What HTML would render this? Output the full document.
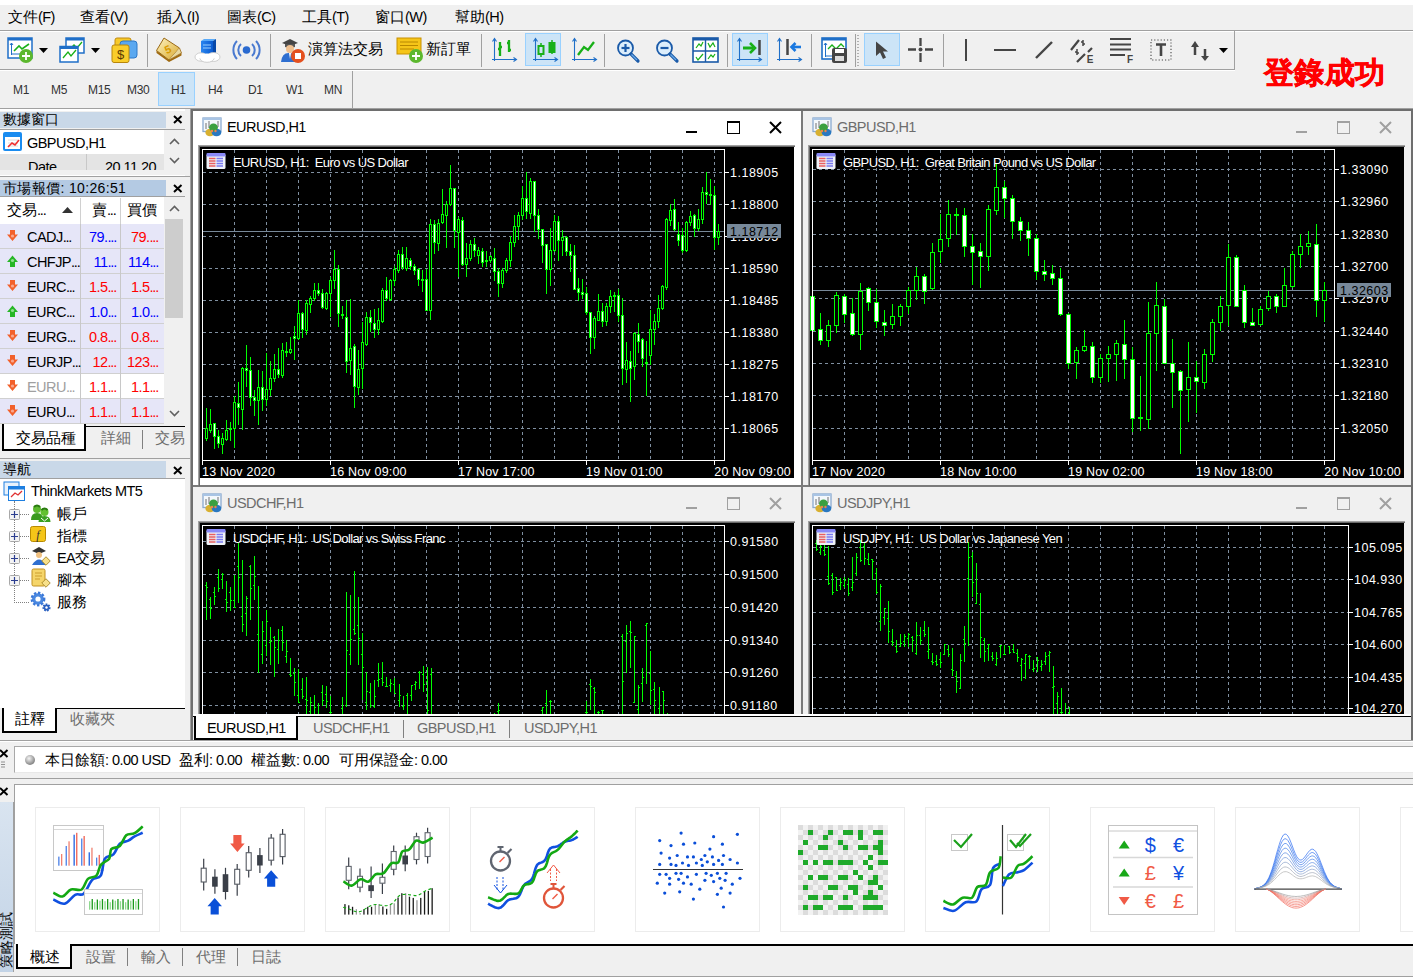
<!DOCTYPE html><html><head><meta charset="utf-8"><style>
*{box-sizing:border-box;margin:0;padding:0}
html,body{width:1413px;height:977px;overflow:hidden;background:#f0f0f0;font-family:"Liberation Sans",sans-serif;color:#000}
.a{position:absolute}
.t{position:absolute;white-space:nowrap;line-height:1}
.hl{position:absolute;height:1px;background:#a0a0a0}
.vl{position:absolute;width:1px;background:#a0a0a0}
svg{position:absolute;overflow:visible}
</style></head><body><div class="a" style="left:0px;top:0px;width:1413px;height:5px;background:#fff"></div><div class="t" style="left:8px;top:10px;font-size:14.5px">文件<span style="letter-spacing:-0.55px">(F)</span></div><div class="t" style="left:80px;top:10px;font-size:14.5px">查看<span style="letter-spacing:-0.55px">(V)</span></div><div class="t" style="left:157px;top:10px;font-size:14.5px">插入<span style="letter-spacing:-0.55px">(I)</span></div><div class="t" style="left:227px;top:10px;font-size:14.5px">圖表<span style="letter-spacing:-0.55px">(C)</span></div><div class="t" style="left:302px;top:10px;font-size:14.5px">工具<span style="letter-spacing:-0.55px">(T)</span></div><div class="t" style="left:375px;top:10px;font-size:14.5px">窗口<span style="letter-spacing:-0.55px">(W)</span></div><div class="t" style="left:455px;top:10px;font-size:14.5px">幫助<span style="letter-spacing:-0.55px">(H)</span></div><div class="a" style="left:0px;top:30px;width:1413px;height:1px;background:#a0a0a0"></div><div class="a" style="left:0px;top:31px;width:1413px;height:1px;background:#fff"></div><div class="a" style="left:0px;top:69px;width:1235px;height:1px;background:#a0a0a0"></div><div class="a" style="left:0px;top:70px;width:1235px;height:1px;background:#fff"></div><div class="a" style="left:158px;top:72px;width:37px;height:34px;background:#cce4f7;border:1px solid #99d1ff"></div><div class="t" style="left:13px;top:84px;font-size:12px;color:#333;letter-spacing:-0.3px">M1</div><div class="t" style="left:51px;top:84px;font-size:12px;color:#333;letter-spacing:-0.3px">M5</div><div class="t" style="left:88px;top:84px;font-size:12px;color:#333;letter-spacing:-0.3px">M15</div><div class="t" style="left:127px;top:84px;font-size:12px;color:#333;letter-spacing:-0.3px">M30</div><div class="t" style="left:171px;top:84px;font-size:12px;color:#333;letter-spacing:-0.3px">H1</div><div class="t" style="left:208px;top:84px;font-size:12px;color:#333;letter-spacing:-0.3px">H4</div><div class="t" style="left:248px;top:84px;font-size:12px;color:#333;letter-spacing:-0.3px">D1</div><div class="t" style="left:286px;top:84px;font-size:12px;color:#333;letter-spacing:-0.3px">W1</div><div class="t" style="left:324px;top:84px;font-size:12px;color:#333;letter-spacing:-0.3px">MN</div><div class="a" style="left:352px;top:71px;width:1px;height:37px;background:#a0a0a0"></div><div class="a" style="left:0px;top:108px;width:1413px;height:1px;background:#a0a0a0"></div><div class="a" style="left:0px;top:109px;width:190px;height:2px;background:#fff"></div><div class="t" style="left:1264px;top:58px;font-size:29.5px;font-weight:bold;color:#f00;-webkit-text-stroke:0.6px #f00;letter-spacing:0.3px">登錄成功</div><div class="a" style="left:147px;top:34px;width:1px;height:33px;background:#a0a0a0"></div><div class="a" style="left:270px;top:34px;width:1px;height:33px;background:#a0a0a0"></div><div class="a" style="left:481px;top:34px;width:1px;height:33px;background:#a0a0a0"></div><div class="a" style="left:604px;top:34px;width:1px;height:33px;background:#a0a0a0"></div><div class="a" style="left:727px;top:34px;width:1px;height:33px;background:#a0a0a0"></div><div class="a" style="left:811px;top:34px;width:1px;height:33px;background:#a0a0a0"></div><div class="a" style="left:943px;top:34px;width:1px;height:33px;background:#a0a0a0"></div><div class="a" style="left:525px;top:33px;width:36px;height:33px;background:#cce4f7;border:1px solid #99d1ff"></div><div class="a" style="left:732px;top:33px;width:36px;height:33px;background:#cce4f7;border:1px solid #99d1ff"></div><div class="a" style="left:864px;top:33px;width:36px;height:33px;background:#cce4f7;border:1px solid #99d1ff"></div><div class="t" style="left:308px;top:42px;font-size:14.5px">演算法交易</div><div class="t" style="left:426px;top:42px;font-size:14.5px">新訂單</div><div class="a" style="left:1234px;top:31px;width:1px;height:39px;background:#a0a0a0"></div><svg style="left:7px;top:37px" width="27" height="27"><rect x="1" y="1" width="24" height="20" fill="#fff" stroke="#1f6fc8" stroke-width="1.5"/><rect x="1" y="1" width="24" height="2.5" fill="#1f6fc8"/><path d="M4.5 18V6M3 8L4.5 6L6 8M4.5 17H22" stroke="#1f6fc8" stroke-width="1" fill="none"/><path d="M7 14L12 9L15 12L22 7" stroke="#18b018" stroke-width="1.6" fill="none"/><circle cx="19" cy="19" r="7" fill="#5cb82e"/><path d="M19 15V23M15 19H23" stroke="#fff" stroke-width="1.8"/></svg><svg style="left:39px;top:48px" width="10" height="6"><path d="M0 0H9L4.5 5Z" fill="#000"/></svg><svg style="left:59px;top:37px" width="27" height="27"><rect x="7" y="1" width="18" height="15" fill="#fff" stroke="#1f6fc8" stroke-width="1.5"/><rect x="7" y="1" width="18" height="2.5" fill="#1f6fc8"/><path d="M10 13L15 8L18 11L23 5" stroke="#18b018" stroke-width="1.3" fill="none"/><rect x="1" y="9.5" width="18" height="15.5" fill="#fff" stroke="#1f6fc8" stroke-width="1.5"/><rect x="1" y="9.5" width="18" height="2.5" fill="#1f6fc8"/><path d="M4 21L9 15L12 19L17 13" stroke="#18b018" stroke-width="1.3" fill="none"/></svg><svg style="left:91px;top:48px" width="10" height="6"><path d="M0 0H9L4.5 5Z" fill="#000"/></svg><svg style="left:111px;top:37px" width="27" height="27"><rect x="4" y="1" width="16" height="14" rx="2" fill="#f7c928" stroke="#c08a10"/><rect x="9" y="4" width="17" height="17" rx="3" fill="#5aa8f0" stroke="#2c78c8"/><rect x="1" y="8" width="17" height="17.5" rx="2" fill="#f9cd2a" stroke="#b8860b"/><text x="9.5" y="22" font-size="13" font-family="Liberation Sans" text-anchor="middle" fill="#5a3a00">$</text></svg><svg style="left:155px;top:37px" width="28" height="26"><defs><linearGradient id="bk" x1="0" y1="0" x2="1" y2="1"><stop offset="0" stop-color="#fff4c0"/><stop offset="1" stop-color="#d8a830"/></linearGradient></defs><path d="M1.5 13.5L14 23L26.5 16V18.5L14 25L1.5 16Z" fill="#a06a10"/><path d="M1.5 13.5L9 1L24.5 11L14 23Z" fill="url(#bk)" stroke="#9a6a18" stroke-width="1"/><path d="M24.5 11L26.5 16L14 23" fill="#e8d8a0" stroke="#9a6a18" stroke-width="0.8"/><text x="12.5" y="16.5" font-size="11" font-family="Liberation Sans" font-weight="bold" text-anchor="middle" fill="#d89a00" transform="rotate(-25 12.5 12)">5</text></svg><svg style="left:194px;top:38px" width="28" height="25"><defs><linearGradient id="sv" x1="0" y1="0" x2="1" y2="0"><stop offset="0" stop-color="#2a86f0"/><stop offset="1" stop-color="#0a5ad0"/></linearGradient></defs><path d="M7 3L10 1H22L19 3Z" fill="#5aaaf8"/><rect x="7" y="3" width="12" height="14" fill="url(#sv)"/><path d="M19 3L22 1V15L19 17Z" fill="#0848a8"/><path d="M9 7H17M9 10H17" stroke="#9ad0ff" stroke-width="1"/><ellipse cx="7" cy="19" rx="6" ry="4.2" fill="#fff" stroke="#c4c4c4" stroke-width="0.8"/><ellipse cx="19.5" cy="19" rx="6.5" ry="4.5" fill="#fff" stroke="#c4c4c4" stroke-width="0.8"/><ellipse cx="13" cy="20.5" rx="7" ry="3.8" fill="#fff" stroke="#c4c4c4" stroke-width="0.8"/><ellipse cx="13" cy="18.5" rx="9" ry="3" fill="#fff"/></svg><svg style="left:233px;top:39px" width="28" height="23"><circle cx="13.5" cy="11" r="3.8" fill="#2a6ad0"/><path d="M8 5A8 8 0 0 0 8 17M19 5A8 8 0 0 1 19 17" stroke="#4a7ad0" stroke-width="2" fill="none"/><path d="M4 2A13 13 0 0 0 4 20M23 2A13 13 0 0 1 23 20" stroke="#4a7ad0" stroke-width="2" fill="none"/></svg><svg style="left:279px;top:37px" width="28" height="27"><path d="M3 6L11 2L19 6L11 9Z" fill="#444"/><path d="M6 7V10Q11 12 16 10V7" fill="#555"/><circle cx="11" cy="12" r="4" fill="#f0c090"/><path d="M2 25Q3 15 11 16Q17 16 19 22V25Z" fill="#2f6fd0"/><path d="M10 16L11 22L12 16Z" fill="#fff"/><circle cx="19" cy="19" r="7" fill="#e4501e"/><rect x="16" y="16" width="6" height="6" fill="#fff"/></svg><svg style="left:396px;top:37px" width="27" height="27"><path d="M1 1H25V16L23 17V4H1Z" fill="#d8a010"/><rect x="1" y="1" width="24" height="16" fill="#f5c518" stroke="#c89000"/><path d="M4 5H22M4 8.5H22M4 12H18" stroke="#b88800" stroke-width="1"/><circle cx="20" cy="19" r="7" fill="#5cb82e"/><path d="M20 15V23M16 19H24" stroke="#fff" stroke-width="1.8"/></svg><svg style="left:491px;top:37px" width="27" height="26"><path d="M3.5 24V2M1.5 4.5L3.5 1.5L5.5 4.5M1 22.5H25M22.5 20.5L25.5 22.5L22.5 24.5" stroke="#1f6fc8" stroke-width="1.1" fill="none"/><path d="M9 5V19M7 12H9M9 10H11M18 3V15M16 6H18M18 13H20" stroke="#18b018" stroke-width="2.3" fill="none"/></svg><svg style="left:532px;top:37px" width="27" height="26"><path d="M3.5 24V2M1.5 4.5L3.5 1.5L5.5 4.5M1 22.5H25M22.5 20.5L25.5 22.5L22.5 24.5" stroke="#1f6fc8" stroke-width="1.1" fill="none"/><path d="M9 6V20M20 3V17" stroke="#18b018" stroke-width="1.5"/><rect x="6.5" y="9" width="5" height="8" fill="#cfe4f6" stroke="#18b018" stroke-width="2"/><rect x="17.5" y="6" width="5" height="9" fill="#18b018" stroke="#18b018" stroke-width="2"/></svg><svg style="left:571px;top:37px" width="27" height="26"><path d="M3.5 24V2M1.5 4.5L3.5 1.5L5.5 4.5M1 22.5H25M22.5 20.5L25.5 22.5L22.5 24.5" stroke="#1f6fc8" stroke-width="1.1" fill="none"/><path d="M7 18L13 10L17 13L23 5" stroke="#18b018" stroke-width="2.3" fill="none"/></svg><svg style="left:616px;top:38px" width="25" height="25"><circle cx="9.5" cy="10" r="7.5" fill="#dceefc" stroke="#1a5aa8" stroke-width="1.8"/><path d="M15 16L22 23" stroke="#1a5aa8" stroke-width="3.2" stroke-linecap="round"/><path d="M15.5 16.5L21 22" stroke="#6aaae8" stroke-width="1.2"/><path d="M5.5 10H13.5" stroke="#1a5aa8" stroke-width="2.2"/><path d="M9.5 6V14" stroke="#1a5aa8" stroke-width="2.2"/></svg><svg style="left:655px;top:38px" width="25" height="25"><circle cx="9.5" cy="10" r="7.5" fill="#dceefc" stroke="#1a5aa8" stroke-width="1.8"/><path d="M15 16L22 23" stroke="#1a5aa8" stroke-width="3.2" stroke-linecap="round"/><path d="M15.5 16.5L21 22" stroke="#6aaae8" stroke-width="1.2"/><path d="M5.5 10H13.5" stroke="#1a5aa8" stroke-width="2.2"/></svg><svg style="left:692px;top:37px" width="27" height="27"><rect x="1" y="1" width="25" height="24" fill="#fff" stroke="#1a5aa8" stroke-width="1.6"/><rect x="1" y="1" width="25" height="2.5" fill="#1a5aa8"/><path d="M13.5 3V25M1 14H26" stroke="#1a5aa8" stroke-width="1.4"/><path d="M4 11L7 7L9 9L11 5M16 6L18 10L21 6L23 10M4 20L6 23L11 17M16 22L19 18L21 20L23 17" stroke="#18b018" stroke-width="1.2" fill="none"/></svg><svg style="left:736px;top:37px" width="28" height="26"><path d="M3.5 24V2M1.5 4.5L3.5 1.5L5.5 4.5M1 22.5H25M22.5 20.5L25.5 22.5L22.5 24.5" stroke="#1f6fc8" stroke-width="1.1" fill="none"/><path d="M7 11H17" stroke="#18b018" stroke-width="3"/><path d="M14 6L19 11L14 16" stroke="#18b018" stroke-width="2.6" fill="none"/><path d="M23.5 3V18" stroke="#454545" stroke-width="2.5"/></svg><svg style="left:776px;top:37px" width="28" height="26"><path d="M3.5 24V2M1.5 4.5L3.5 1.5L5.5 4.5M1 22.5H25M22.5 20.5L25.5 22.5L22.5 24.5" stroke="#1f6fc8" stroke-width="1.1" fill="none"/><path d="M11.5 2V18" stroke="#454545" stroke-width="2.5"/><path d="M16 10H25" stroke="#1a78e0" stroke-width="2.6"/><path d="M19.5 6L15.5 10L19.5 14" stroke="#1a78e0" stroke-width="2.6" fill="none"/></svg><svg style="left:821px;top:37px" width="28" height="27"><rect x="1" y="1" width="24" height="21" fill="#fff" stroke="#1f6fc8" stroke-width="1.6"/><rect x="1" y="1" width="24" height="2.5" fill="#1f6fc8"/><path d="M4.5 20V6M3 8L4.5 6L6 8M4.5 19H13" stroke="#1f6fc8" stroke-width="1" fill="none"/><path d="M7 12L11 8L15 12L20 7L23 10" stroke="#18b018" stroke-width="1.3" fill="none"/><rect x="11" y="11" width="15" height="15" rx="2" fill="#454545"/><rect x="14" y="12" width="9" height="4" fill="#fff"/><rect x="14" y="19" width="9" height="5" fill="#ddd"/></svg><div class="a" style="left:855px;top:34px;width:1px;height:33px;background:#a0a0a0"></div><div class="a" style="left:857px;top:35px;width:2px;height:31px;background:repeating-linear-gradient(#b0b0b0 0 1px,transparent 1px 3px)"></div><svg style="left:874px;top:40px" width="16" height="22"><path d="M2 1.5V16L6 12.5L9 19L12 17.5L9 11.5H14Z" fill="#454545"/></svg><svg style="left:907px;top:37px" width="27" height="26"><path d="M13.5 1V9M13.5 16V25M1 12.5H9M18 12.5H26" stroke="#454545" stroke-width="2.3"/><circle cx="13.5" cy="12.5" r="2" fill="#454545"/></svg><div class="a" style="left:965px;top:39px;width:2px;height:22px;background:#454545"></div><div class="a" style="left:994px;top:49px;width:22px;height:2px;background:#454545"></div><svg style="left:1034px;top:40px" width="20" height="20"><path d="M2 18L18 2" stroke="#454545" stroke-width="2.4"/></svg><svg style="left:1070px;top:37px" width="27" height="27"><path d="M1 13L9 3M7 25L15 17M18 15L22 11" stroke="#454545" stroke-width="2.2"/><path d="M13 3V9M11 5H13M13 7H15M7 12V18M5 15H7M7 16H9" stroke="#454545" stroke-width="1.5"/><text x="20" y="26" font-size="10" font-weight="bold" font-family="Liberation Sans" text-anchor="middle" fill="#454545">E</text></svg><svg style="left:1109px;top:37px" width="27" height="27"><path d="M1 2H22M1 7.5H22M1 12.5H22M1 18H16" stroke="#454545" stroke-width="2"/><text x="21" y="26" font-size="10" font-weight="bold" font-family="Liberation Sans" text-anchor="middle" fill="#454545">F</text></svg><svg style="left:1150px;top:39px" width="23" height="23"><rect x="1" y="1" width="20" height="20" fill="none" stroke="#454545" stroke-width="1.1" stroke-dasharray="1.2 2"/><path d="M6 5.5H16M11 5.5V17" stroke="#454545" stroke-width="2.6"/></svg><svg style="left:1190px;top:39px" width="22" height="23"><path d="M5 16V6" stroke="#454545" stroke-width="2.5"/><path d="M1 8L5 2L9 8Z" fill="#454545"/><path d="M15 10V19" stroke="#454545" stroke-width="2.5"/><path d="M11 17L15 22L19 17Z" fill="#454545"/></svg><svg style="left:1219px;top:48px" width="10" height="6"><path d="M0 0H9L4.5 5Z" fill="#000"/></svg><div class="a" style="left:185px;top:109px;width:5px;height:632px;background:#f0f0f0"></div><div class="a" style="left:0px;top:111px;width:185px;height:1px;background:#f0f0f0"></div><div class="a" style="left:0px;top:112px;width:166px;height:16px;background:#c9d8e8"></div><div class="t" style="left:3px;top:112px;font-size:14px">數據窗口</div><svg style="left:173px;top:115px" width="10" height="9"><path d="M1 1L8.5 8M8.5 1L1 8" stroke="#000" stroke-width="2"/></svg><div class="a" style="left:0px;top:129px;width:185px;height:1px;background:#a0a0a0"></div><div class="a" style="left:0px;top:130px;width:164px;height:24px;background:#fff"></div><div class="a" style="left:0px;top:154px;width:164px;height:16px;background:#e4e4e4"></div><div class="a" style="left:86px;top:154px;width:1px;height:16px;background:#c8c8c8"></div><div class="a" style="left:0;top:154px;width:164px;height:16px;overflow:hidden"><div class="t" style="left:28px;top:6px;font-size:14.5px"><span style="letter-spacing:-0.55px">Date</span></div><div class="t" style="left:105px;top:6px;font-size:14.5px"><span style="letter-spacing:-0.55px">20.11.20</span></div></div><div class="a" style="left:164px;top:130px;width:21px;height:41px;background:#f0f0f0"></div><svg style="left:169px;top:138px" width="11" height="7"><path d="M1 6L5.5 1.5L10 6" fill="none" stroke="#606060" stroke-width="1.6"/></svg><svg style="left:169px;top:157px" width="11" height="7"><path d="M1 1L5.5 5.5L10 1" fill="none" stroke="#606060" stroke-width="1.6"/></svg><svg style="left:3px;top:132px" width="19" height="19"><rect x="1" y="1" width="17" height="17" rx="1" fill="#fff" stroke="#1a8cf0" stroke-width="2"/><rect x="1" y="1" width="17" height="4" fill="#1a8cf0"/><path d="M5 8H15M5 11H15M5 14H15" stroke="#dcdcdc" stroke-width="1"/><path d="M5 15L9 11L12 13L16 8" fill="none" stroke="#f03030" stroke-width="1.6"/></svg><div class="t" style="left:27px;top:136px;font-size:14.5px"><span style="letter-spacing:-0.55px">GBPUSD,H1</span></div><div class="a" style="left:0px;top:175px;width:185px;height:1px;background:#fff"></div><div class="a" style="left:0px;top:176px;width:190px;height:1px;background:#a0a0a0"></div><div class="a" style="left:0px;top:180px;width:166px;height:16px;background:#b4cae3"></div><div class="t" style="left:3px;top:181px;font-size:14px;letter-spacing:0.35px">市場報價: 10:26:51</div><svg style="left:173px;top:184px" width="10" height="9"><path d="M1 1L8.5 8M8.5 1L1 8" stroke="#000" stroke-width="2"/></svg><div class="a" style="left:0px;top:196px;width:185px;height:1px;background:#a0a0a0"></div><div class="a" style="left:0px;top:197px;width:164px;height:227px;background:#fff"></div><div class="t" style="left:7px;top:203px;font-size:14.5px">交易<span style="letter-spacing:-0.55px"><span style="letter-spacing:-1.2px">...</span></span></div><svg style="left:62px;top:207px" width="11" height="7"><path d="M0 6L5.5 0L11 6Z" fill="#333"/></svg><div class="t" style="left:92px;top:203px;font-size:14.5px">賣<span style="letter-spacing:-0.55px"><span style="letter-spacing:-1.2px">...</span></span></div><div class="t" style="left:127px;top:203px;font-size:14.5px">買價</div><div class="a" style="left:80px;top:198px;width:1px;height:226px;background:#d0d0d0"></div><div class="a" style="left:120px;top:198px;width:1px;height:226px;background:#d0d0d0"></div><div class="a" style="left:0px;top:224px;width:164px;height:24px;background:#e6e6f8"></div><div class="a" style="left:0px;top:248px;width:164px;height:1px;background:#d0d0d0"></div><div class="a" style="left:80px;top:224px;width:1px;height:25px;background:#c8c8c8"></div><div class="a" style="left:120px;top:224px;width:1px;height:25px;background:#c8c8c8"></div><div class="t" style="left:27px;top:230px;font-size:14.5px;color:#000"><span style="letter-spacing:-0.55px">CADJ<span style="letter-spacing:-1.2px">...</span></span></div><div class="t" style="left:81px;top:230px;width:35px;text-align:right;font-size:14.5px;color:#00f"><span style="letter-spacing:-0.55px">79.<span style="letter-spacing:-1.2px">...</span></span></div><div class="t" style="left:121px;top:230px;width:37px;text-align:right;font-size:14.5px;color:#f00"><span style="letter-spacing:-0.55px">79.<span style="letter-spacing:-1.2px">...</span></span></div><svg style="left:6px;top:229px" width="13" height="13"><path d="M4 1H9V5.5H12L6.5 12L1 5.5H4Z" fill="#f2602a"/><circle cx="6.5" cy="7" r="1.6" fill="#f8a890"/></svg><div class="a" style="left:0px;top:249px;width:164px;height:24px;background:#e6e6f8"></div><div class="a" style="left:0px;top:273px;width:164px;height:1px;background:#d0d0d0"></div><div class="a" style="left:80px;top:249px;width:1px;height:25px;background:#c8c8c8"></div><div class="a" style="left:120px;top:249px;width:1px;height:25px;background:#c8c8c8"></div><div class="t" style="left:27px;top:255px;font-size:14.5px;color:#000"><span style="letter-spacing:-0.55px">CHFJP<span style="letter-spacing:-1.2px">...</span></span></div><div class="t" style="left:81px;top:255px;width:35px;text-align:right;font-size:14.5px;color:#00f"><span style="letter-spacing:-0.55px">11<span style="letter-spacing:-1.2px">...</span></span></div><div class="t" style="left:121px;top:255px;width:37px;text-align:right;font-size:14.5px;color:#00f"><span style="letter-spacing:-0.55px">114<span style="letter-spacing:-1.2px">...</span></span></div><svg style="left:6px;top:255px" width="13" height="13"><path d="M4 12H9V7H12L6.5 0.5L1 7H4Z" fill="#26b626"/><circle cx="6.5" cy="5.5" r="1.6" fill="#90e090"/></svg><div class="a" style="left:0px;top:274px;width:164px;height:24px;background:#e6e6f8"></div><div class="a" style="left:0px;top:298px;width:164px;height:1px;background:#d0d0d0"></div><div class="a" style="left:80px;top:274px;width:1px;height:25px;background:#c8c8c8"></div><div class="a" style="left:120px;top:274px;width:1px;height:25px;background:#c8c8c8"></div><div class="t" style="left:27px;top:280px;font-size:14.5px;color:#000"><span style="letter-spacing:-0.55px">EURC<span style="letter-spacing:-1.2px">...</span></span></div><div class="t" style="left:81px;top:280px;width:35px;text-align:right;font-size:14.5px;color:#f00"><span style="letter-spacing:-0.55px">1.5<span style="letter-spacing:-1.2px">...</span></span></div><div class="t" style="left:121px;top:280px;width:37px;text-align:right;font-size:14.5px;color:#f00"><span style="letter-spacing:-0.55px">1.5<span style="letter-spacing:-1.2px">...</span></span></div><svg style="left:6px;top:279px" width="13" height="13"><path d="M4 1H9V5.5H12L6.5 12L1 5.5H4Z" fill="#f2602a"/><circle cx="6.5" cy="7" r="1.6" fill="#f8a890"/></svg><div class="a" style="left:0px;top:299px;width:164px;height:24px;background:#e6e6f8"></div><div class="a" style="left:0px;top:323px;width:164px;height:1px;background:#d0d0d0"></div><div class="a" style="left:80px;top:299px;width:1px;height:25px;background:#c8c8c8"></div><div class="a" style="left:120px;top:299px;width:1px;height:25px;background:#c8c8c8"></div><div class="t" style="left:27px;top:305px;font-size:14.5px;color:#000"><span style="letter-spacing:-0.55px">EURC<span style="letter-spacing:-1.2px">...</span></span></div><div class="t" style="left:81px;top:305px;width:35px;text-align:right;font-size:14.5px;color:#00f"><span style="letter-spacing:-0.55px">1.0<span style="letter-spacing:-1.2px">...</span></span></div><div class="t" style="left:121px;top:305px;width:37px;text-align:right;font-size:14.5px;color:#00f"><span style="letter-spacing:-0.55px">1.0<span style="letter-spacing:-1.2px">...</span></span></div><svg style="left:6px;top:305px" width="13" height="13"><path d="M4 12H9V7H12L6.5 0.5L1 7H4Z" fill="#26b626"/><circle cx="6.5" cy="5.5" r="1.6" fill="#90e090"/></svg><div class="a" style="left:0px;top:324px;width:164px;height:24px;background:#e6e6f8"></div><div class="a" style="left:0px;top:348px;width:164px;height:1px;background:#d0d0d0"></div><div class="a" style="left:80px;top:324px;width:1px;height:25px;background:#c8c8c8"></div><div class="a" style="left:120px;top:324px;width:1px;height:25px;background:#c8c8c8"></div><div class="t" style="left:27px;top:330px;font-size:14.5px;color:#000"><span style="letter-spacing:-0.55px">EURG<span style="letter-spacing:-1.2px">...</span></span></div><div class="t" style="left:81px;top:330px;width:35px;text-align:right;font-size:14.5px;color:#f00"><span style="letter-spacing:-0.55px">0.8<span style="letter-spacing:-1.2px">...</span></span></div><div class="t" style="left:121px;top:330px;width:37px;text-align:right;font-size:14.5px;color:#f00"><span style="letter-spacing:-0.55px">0.8<span style="letter-spacing:-1.2px">...</span></span></div><svg style="left:6px;top:329px" width="13" height="13"><path d="M4 1H9V5.5H12L6.5 12L1 5.5H4Z" fill="#f2602a"/><circle cx="6.5" cy="7" r="1.6" fill="#f8a890"/></svg><div class="a" style="left:0px;top:349px;width:164px;height:24px;background:#e6e6f8"></div><div class="a" style="left:0px;top:373px;width:164px;height:1px;background:#d0d0d0"></div><div class="a" style="left:80px;top:349px;width:1px;height:25px;background:#c8c8c8"></div><div class="a" style="left:120px;top:349px;width:1px;height:25px;background:#c8c8c8"></div><div class="t" style="left:27px;top:355px;font-size:14.5px;color:#000"><span style="letter-spacing:-0.55px">EURJP<span style="letter-spacing:-1.2px">...</span></span></div><div class="t" style="left:81px;top:355px;width:35px;text-align:right;font-size:14.5px;color:#f00"><span style="letter-spacing:-0.55px">12<span style="letter-spacing:-1.2px">...</span></span></div><div class="t" style="left:121px;top:355px;width:37px;text-align:right;font-size:14.5px;color:#f00"><span style="letter-spacing:-0.55px">123<span style="letter-spacing:-1.2px">...</span></span></div><svg style="left:6px;top:354px" width="13" height="13"><path d="M4 1H9V5.5H12L6.5 12L1 5.5H4Z" fill="#f2602a"/><circle cx="6.5" cy="7" r="1.6" fill="#f8a890"/></svg><div class="a" style="left:0px;top:398px;width:164px;height:1px;background:#d0d0d0"></div><div class="a" style="left:80px;top:374px;width:1px;height:25px;background:#c8c8c8"></div><div class="a" style="left:120px;top:374px;width:1px;height:25px;background:#c8c8c8"></div><div class="t" style="left:27px;top:380px;font-size:14.5px;color:#a0a0a0"><span style="letter-spacing:-0.55px">EURU<span style="letter-spacing:-1.2px">...</span></span></div><div class="t" style="left:81px;top:380px;width:35px;text-align:right;font-size:14.5px;color:#f00"><span style="letter-spacing:-0.55px">1.1<span style="letter-spacing:-1.2px">...</span></span></div><div class="t" style="left:121px;top:380px;width:37px;text-align:right;font-size:14.5px;color:#f00"><span style="letter-spacing:-0.55px">1.1<span style="letter-spacing:-1.2px">...</span></span></div><svg style="left:6px;top:379px" width="13" height="13"><path d="M4 1H9V5.5H12L6.5 12L1 5.5H4Z" fill="#f2602a"/><circle cx="6.5" cy="7" r="1.6" fill="#f8a890"/></svg><div class="a" style="left:0px;top:399px;width:164px;height:24px;background:#e6e6f8"></div><div class="a" style="left:0px;top:423px;width:164px;height:1px;background:#d0d0d0"></div><div class="a" style="left:80px;top:399px;width:1px;height:25px;background:#c8c8c8"></div><div class="a" style="left:120px;top:399px;width:1px;height:25px;background:#c8c8c8"></div><div class="t" style="left:27px;top:405px;font-size:14.5px;color:#000"><span style="letter-spacing:-0.55px">EURU<span style="letter-spacing:-1.2px">...</span></span></div><div class="t" style="left:81px;top:405px;width:35px;text-align:right;font-size:14.5px;color:#f00"><span style="letter-spacing:-0.55px">1.1<span style="letter-spacing:-1.2px">...</span></span></div><div class="t" style="left:121px;top:405px;width:37px;text-align:right;font-size:14.5px;color:#f00"><span style="letter-spacing:-0.55px">1.1<span style="letter-spacing:-1.2px">...</span></span></div><svg style="left:6px;top:404px" width="13" height="13"><path d="M4 1H9V5.5H12L6.5 12L1 5.5H4Z" fill="#f2602a"/><circle cx="6.5" cy="7" r="1.6" fill="#f8a890"/></svg><div class="a" style="left:164px;top:197px;width:21px;height:227px;background:#f0f0f0"></div><div class="a" style="left:165px;top:219px;width:18px;height:99px;background:#cdcdcd"></div><svg style="left:169px;top:205px" width="11" height="7"><path d="M1 6L5.5 1.5L10 6" fill="none" stroke="#606060" stroke-width="1.6"/></svg><svg style="left:169px;top:410px" width="11" height="7"><path d="M1 1L5.5 5.5L10 1" fill="none" stroke="#606060" stroke-width="1.6"/></svg><div class="a" style="left:0px;top:424px;width:185px;height:29px;background:#f0f0f0"></div><div class="a" style="left:86px;top:426px;width:99px;height:1px;background:#000"></div><div class="a" style="left:2px;top:424px;width:84px;height:27px;background:#fff;border:2px solid #000;border-top:none"></div><div class="t" style="left:16px;top:431px;font-size:14.5px">交易品種</div><div class="t" style="left:101px;top:431px;font-size:14.5px;color:#6d6d6d">詳細</div><div class="a" style="left:142px;top:430px;width:1px;height:19px;background:#808080"></div><div class="t" style="left:155px;top:431px;font-size:14.5px;color:#6d6d6d">交易</div><div class="a" style="left:0px;top:458px;width:190px;height:1px;background:#a0a0a0"></div><div class="a" style="left:0px;top:461px;width:166px;height:17px;background:#c9d8e8"></div><div class="t" style="left:3px;top:462px;font-size:14px">導航</div><svg style="left:173px;top:466px" width="10" height="9"><path d="M1 1L8.5 8M8.5 1L1 8" stroke="#000" stroke-width="2"/></svg><div class="a" style="left:0px;top:478px;width:185px;height:1px;background:#a0a0a0"></div><div class="a" style="left:0px;top:479px;width:185px;height:229px;background:#fff"></div><svg style="left:3px;top:481px" width="23" height="21"><rect x="1" y="1" width="15" height="13" fill="#e8f2fc" stroke="#1e7fe0"/><rect x="5.5" y="5.5" width="16" height="14" fill="#fff" stroke="#1e7fe0"/><rect x="5.5" y="5.5" width="16" height="3" fill="#1e7fe0"/><path d="M8 16L12 12L15 14L19 10" fill="none" stroke="#e03030" stroke-width="1.3"/></svg><div class="t" style="left:31px;top:484px;font-size:14.5px"><span style="letter-spacing:-0.55px">ThinkMarkets MT5</span></div><div class="a" style="left:14px;top:501px;width:1px;height:100px;border-left:1px dotted #808080"></div><div class="a" style="left:14px;top:514px;width:15px;height:1px;border-top:1px dotted #808080"></div><svg style="left:9px;top:509px" width="12" height="12"><rect x="0.5" y="0.5" width="10" height="10" rx="1" fill="#f4f4f4" stroke="#a8a8a8"/><path d="M2 5.5H9M5.5 2V9" stroke="#2c3e90" stroke-width="1.2"/></svg><div class="t" style="left:57px;top:507px;font-size:14.5px">帳戶</div><div class="a" style="left:14px;top:536px;width:15px;height:1px;border-top:1px dotted #808080"></div><svg style="left:9px;top:531px" width="12" height="12"><rect x="0.5" y="0.5" width="10" height="10" rx="1" fill="#f4f4f4" stroke="#a8a8a8"/><path d="M2 5.5H9M5.5 2V9" stroke="#2c3e90" stroke-width="1.2"/></svg><div class="t" style="left:57px;top:529px;font-size:14.5px">指標</div><div class="a" style="left:14px;top:558px;width:15px;height:1px;border-top:1px dotted #808080"></div><svg style="left:9px;top:553px" width="12" height="12"><rect x="0.5" y="0.5" width="10" height="10" rx="1" fill="#f4f4f4" stroke="#a8a8a8"/><path d="M2 5.5H9M5.5 2V9" stroke="#2c3e90" stroke-width="1.2"/></svg><div class="t" style="left:57px;top:551px;font-size:14.5px"><span style="letter-spacing:-0.55px">EA</span>交易</div><div class="a" style="left:14px;top:580px;width:15px;height:1px;border-top:1px dotted #808080"></div><svg style="left:9px;top:575px" width="12" height="12"><rect x="0.5" y="0.5" width="10" height="10" rx="1" fill="#f4f4f4" stroke="#a8a8a8"/><path d="M2 5.5H9M5.5 2V9" stroke="#2c3e90" stroke-width="1.2"/></svg><div class="t" style="left:57px;top:573px;font-size:14.5px">腳本</div><div class="a" style="left:14px;top:602px;width:15px;height:1px;border-top:1px dotted #808080"></div><div class="t" style="left:57px;top:595px;font-size:14.5px">服務</div><svg style="left:30px;top:503px" width="22" height="20"><circle cx="7" cy="6" r="4" fill="#5cb82e"/><path d="M1 17Q1 10 7 10Q13 10 13 17Z" fill="#3a9a20"/><path d="M4 4Q7 1 10 4" stroke="#2a7a10" stroke-width="2" fill="none"/><circle cx="14.5" cy="9" r="4" fill="#62c030"/><path d="M8.5 19Q8.5 13 14.5 13Q20.5 13 20.5 19Z" fill="#3aa020"/><path d="M11.5 7Q14.5 4 17.5 7" stroke="#2a7a10" stroke-width="2" fill="none"/><path d="M11 15L14.5 18L18 15" stroke="#fff" stroke-width="1" fill="none"/></svg><svg style="left:30px;top:526px" width="17" height="17"><rect x="0.5" y="0.5" width="15" height="15" rx="2" fill="#f5c518" stroke="#b88a00"/><text x="8" y="13" font-size="12" font-style="italic" text-anchor="middle" font-family="Liberation Serif" fill="#333">f</text></svg><svg style="left:30px;top:546px" width="21" height="20"><path d="M2 5L9 1L16 5L9 8Z" fill="#333"/><circle cx="9" cy="9" r="3" fill="#f0c080"/><path d="M2 19Q9 8 16 19Z" fill="#2f6fd0"/><rect x="13" y="12" width="6" height="6" transform="rotate(45 16 15)" fill="#f7e08a" stroke="#a08020" stroke-width="0.8"/></svg><svg style="left:30px;top:568px" width="21" height="20"><rect x="2" y="1" width="13" height="17" rx="1.5" fill="#f5d56a" stroke="#c09020"/><path d="M5 5H12M5 8H12M5 11H10" stroke="#c09020" stroke-width="0.8"/><rect x="13" y="12" width="6" height="6" transform="rotate(45 16 15)" fill="#f7e08a" stroke="#a08020" stroke-width="0.8"/></svg><svg style="left:30px;top:591px" width="22" height="22"><circle cx="8" cy="8" r="5.8" fill="#3a78d8" stroke="#3a78d8" stroke-width="3.2" stroke-dasharray="2.2 1.6"/><circle cx="8" cy="8" r="5.2" fill="#4a88e0"/><circle cx="8" cy="8" r="2.6" fill="#fff"/><circle cx="16.5" cy="16.5" r="3" fill="#2a60c0" stroke="#2a60c0" stroke-width="2.2" stroke-dasharray="1.5 1.1"/><circle cx="16.5" cy="16.5" r="1.2" fill="#fff"/></svg><div class="a" style="left:0px;top:708px;width:185px;height:27px;background:#f0f0f0"></div><div class="a" style="left:57px;top:708px;width:128px;height:1px;background:#000"></div><div class="a" style="left:2px;top:708px;width:55px;height:25px;background:#fff;border:2px solid #000;border-top:none"></div><div class="t" style="left:15px;top:712px;font-size:14.5px">註釋</div><div class="t" style="left:70px;top:712px;font-size:14.5px;color:#6d6d6d">收藏夾</div><div class="a" style="left:190px;top:108px;width:1223px;height:1px;background:#a0a0a0"></div><div class="a" style="left:191px;top:109px;width:1222px;height:2px;background:#6e6e6e"></div><div class="a" style="left:190px;top:109px;width:1px;height:632px;background:#a0a0a0"></div><div class="a" style="left:191px;top:109px;width:2px;height:632px;background:#6e6e6e"></div><div class="a" style="left:1411px;top:109px;width:2px;height:632px;background:#6e6e6e"></div><div class="a" style="left:801px;top:111px;width:2px;height:603px;background:#7a7a7a"></div><div class="a" style="left:193px;top:485px;width:1218px;height:2px;background:#7a7a7a"></div><div class="a" style="left:193px;top:111px;width:608px;height:374px;background:#fff"></div><svg style="left:202px;top:117px" width="21" height="20"><rect x="1" y="1" width="18" height="13.5" fill="#f4f8fc" stroke="#8aaad0" stroke-width="1.3"/><rect x="1" y="1" width="18" height="2" fill="#a8c4e4"/><path d="M4 12V6M7 11V4M16 10V4" stroke="#707070" stroke-width="1"/><ellipse cx="8" cy="15.5" rx="4.6" ry="3.8" fill="#d8b030"/><ellipse cx="14.5" cy="15.5" rx="4.8" ry="3.8" fill="#2a78c0"/><ellipse cx="11.5" cy="10.5" rx="4.4" ry="4" fill="#3aa040"/><circle cx="10" cy="14" r="1.2" fill="#f08050"/><circle cx="13.5" cy="14" r="1.2" fill="#f08050"/></svg><div class="t" style="left:227px;top:120px;font-size:14.5px;color:#000"><span style="letter-spacing:-0.55px">EURUSD,H1</span></div><div class="a" style="left:686px;top:131px;width:11px;height:2px;background:#000"></div><div class="a" style="left:727px;top:121px;width:13px;height:13px;border:1.5px solid #000;border-top-width:2.5px"></div><svg style="left:769px;top:121px" width="13" height="13"><path d="M1 1L12 12M12 1L1 12" stroke="#000" stroke-width="2"/></svg><div class="a" style="left:198px;top:145px;width:597px;height:1px;background:#a0a0a0"></div><div class="a" style="left:198px;top:145px;width:1px;height:340px;background:#a0a0a0"></div><div class="a" style="left:199px;top:146px;width:596px;height:1px;background:#696969"></div><div class="a" style="left:199px;top:146px;width:1px;height:340px;background:#696969"></div><div class="a" style="left:803px;top:111px;width:608px;height:374px;background:#f0f0f0"></div><svg style="left:812px;top:117px" width="21" height="20"><rect x="1" y="1" width="18" height="13.5" fill="#f4f8fc" stroke="#8aaad0" stroke-width="1.3"/><rect x="1" y="1" width="18" height="2" fill="#a8c4e4"/><path d="M4 12V6M7 11V4M16 10V4" stroke="#707070" stroke-width="1"/><ellipse cx="8" cy="15.5" rx="4.6" ry="3.8" fill="#d8b030"/><ellipse cx="14.5" cy="15.5" rx="4.8" ry="3.8" fill="#2a78c0"/><ellipse cx="11.5" cy="10.5" rx="4.4" ry="4" fill="#3aa040"/><circle cx="10" cy="14" r="1.2" fill="#f08050"/><circle cx="13.5" cy="14" r="1.2" fill="#f08050"/></svg><div class="t" style="left:837px;top:120px;font-size:14.5px;color:#6d6d6d"><span style="letter-spacing:-0.55px">GBPUSD,H1</span></div><div class="a" style="left:1296px;top:131px;width:11px;height:2px;background:#a0a0a0"></div><div class="a" style="left:1337px;top:121px;width:13px;height:13px;border:1.5px solid #a0a0a0;border-top-width:2.5px"></div><svg style="left:1379px;top:121px" width="13" height="13"><path d="M1 1L12 12M12 1L1 12" stroke="#a0a0a0" stroke-width="2"/></svg><div class="a" style="left:808px;top:145px;width:597px;height:1px;background:#a0a0a0"></div><div class="a" style="left:808px;top:145px;width:1px;height:340px;background:#a0a0a0"></div><div class="a" style="left:809px;top:146px;width:596px;height:1px;background:#696969"></div><div class="a" style="left:809px;top:146px;width:1px;height:340px;background:#696969"></div><div class="a" style="left:193px;top:487px;width:608px;height:227px;background:#f0f0f0"></div><svg style="left:202px;top:493px" width="21" height="20"><rect x="1" y="1" width="18" height="13.5" fill="#f4f8fc" stroke="#8aaad0" stroke-width="1.3"/><rect x="1" y="1" width="18" height="2" fill="#a8c4e4"/><path d="M4 12V6M7 11V4M16 10V4" stroke="#707070" stroke-width="1"/><ellipse cx="8" cy="15.5" rx="4.6" ry="3.8" fill="#d8b030"/><ellipse cx="14.5" cy="15.5" rx="4.8" ry="3.8" fill="#2a78c0"/><ellipse cx="11.5" cy="10.5" rx="4.4" ry="4" fill="#3aa040"/><circle cx="10" cy="14" r="1.2" fill="#f08050"/><circle cx="13.5" cy="14" r="1.2" fill="#f08050"/></svg><div class="t" style="left:227px;top:496px;font-size:14.5px;color:#6d6d6d"><span style="letter-spacing:-0.55px">USDCHF,H1</span></div><div class="a" style="left:686px;top:507px;width:11px;height:2px;background:#a0a0a0"></div><div class="a" style="left:727px;top:497px;width:13px;height:13px;border:1.5px solid #a0a0a0;border-top-width:2.5px"></div><svg style="left:769px;top:497px" width="13" height="13"><path d="M1 1L12 12M12 1L1 12" stroke="#a0a0a0" stroke-width="2"/></svg><div class="a" style="left:198px;top:521px;width:597px;height:1px;background:#a0a0a0"></div><div class="a" style="left:198px;top:521px;width:1px;height:193px;background:#a0a0a0"></div><div class="a" style="left:199px;top:522px;width:596px;height:1px;background:#696969"></div><div class="a" style="left:199px;top:522px;width:1px;height:193px;background:#696969"></div><div class="a" style="left:803px;top:487px;width:608px;height:227px;background:#f0f0f0"></div><svg style="left:812px;top:493px" width="21" height="20"><rect x="1" y="1" width="18" height="13.5" fill="#f4f8fc" stroke="#8aaad0" stroke-width="1.3"/><rect x="1" y="1" width="18" height="2" fill="#a8c4e4"/><path d="M4 12V6M7 11V4M16 10V4" stroke="#707070" stroke-width="1"/><ellipse cx="8" cy="15.5" rx="4.6" ry="3.8" fill="#d8b030"/><ellipse cx="14.5" cy="15.5" rx="4.8" ry="3.8" fill="#2a78c0"/><ellipse cx="11.5" cy="10.5" rx="4.4" ry="4" fill="#3aa040"/><circle cx="10" cy="14" r="1.2" fill="#f08050"/><circle cx="13.5" cy="14" r="1.2" fill="#f08050"/></svg><div class="t" style="left:837px;top:496px;font-size:14.5px;color:#6d6d6d"><span style="letter-spacing:-0.55px">USDJPY,H1</span></div><div class="a" style="left:1296px;top:507px;width:11px;height:2px;background:#a0a0a0"></div><div class="a" style="left:1337px;top:497px;width:13px;height:13px;border:1.5px solid #a0a0a0;border-top-width:2.5px"></div><svg style="left:1379px;top:497px" width="13" height="13"><path d="M1 1L12 12M12 1L1 12" stroke="#a0a0a0" stroke-width="2"/></svg><div class="a" style="left:808px;top:521px;width:597px;height:1px;background:#a0a0a0"></div><div class="a" style="left:808px;top:521px;width:1px;height:193px;background:#a0a0a0"></div><div class="a" style="left:809px;top:522px;width:596px;height:1px;background:#696969"></div><div class="a" style="left:809px;top:522px;width:1px;height:193px;background:#696969"></div><svg style="left:200px;top:147px;overflow:hidden" width="594" height="331" shape-rendering="crispEdges"><rect x="0" y="0" width="594" height="331" fill="#000"/><path d="M34.5 3V313M66.5 3V313M98.5 3V313M130.5 3V313M162.5 3V313M194.5 3V313M226.5 3V313M258.5 3V313M290.5 3V313M322.5 3V313M354.5 3V313M386.5 3V313M418.5 3V313M450.5 3V313M482.5 3V313M514.5 3V313M3 25.5H524M3 57.5H524M3 89.5H524M3 121.5H524M3 153.5H524M3 185.5H524M3 217.5H524M3 249.5H524M3 281.5H524" stroke="#7f8fa0" stroke-width="1" stroke-dasharray="3 3" fill="none"/><rect x="3" y="84" width="521" height="1" fill="#778899"/><rect x="6" y="261" width="1" height="33" fill="#00ff00"/><rect x="5" y="281" width="3" height="11" fill="#00ff00"/><rect x="6" y="282" width="1" height="9" fill="#000"/><rect x="10" y="262" width="1" height="24" fill="#00ff00"/><rect x="9" y="277" width="3" height="7" fill="#00ff00"/><rect x="10" y="278" width="1" height="5" fill="#000"/><rect x="14" y="276" width="1" height="26" fill="#00ff00"/><rect x="13" y="276" width="3" height="14" fill="#00ff00"/><rect x="14" y="277" width="1" height="12" fill="#fff"/><rect x="18" y="283" width="1" height="18" fill="#00ff00"/><rect x="17" y="289" width="3" height="8" fill="#00ff00"/><rect x="18" y="290" width="1" height="6" fill="#fff"/><rect x="22" y="286" width="1" height="21" fill="#00ff00"/><rect x="21" y="291" width="3" height="7" fill="#00ff00"/><rect x="22" y="292" width="1" height="5" fill="#000"/><rect x="26" y="273" width="1" height="21" fill="#00ff00"/><rect x="25" y="283" width="3" height="10" fill="#00ff00"/><rect x="26" y="284" width="1" height="8" fill="#000"/><rect x="30" y="275" width="1" height="19" fill="#00ff00"/><rect x="29" y="281" width="3" height="2" fill="#00ff00"/><rect x="34" y="249" width="1" height="52" fill="#00ff00"/><rect x="33" y="255" width="3" height="27" fill="#00ff00"/><rect x="34" y="256" width="1" height="25" fill="#000"/><rect x="38" y="235" width="1" height="43" fill="#00ff00"/><rect x="37" y="256" width="3" height="5" fill="#00ff00"/><rect x="38" y="257" width="1" height="3" fill="#fff"/><rect x="42" y="220" width="1" height="63" fill="#00ff00"/><rect x="41" y="221" width="3" height="42" fill="#00ff00"/><rect x="42" y="222" width="1" height="40" fill="#000"/><rect x="46" y="198" width="1" height="42" fill="#00ff00"/><rect x="45" y="221" width="3" height="3" fill="#00ff00"/><rect x="46" y="222" width="1" height="1" fill="#fff"/><rect x="50" y="210" width="1" height="49" fill="#00ff00"/><rect x="49" y="223" width="3" height="28" fill="#00ff00"/><rect x="50" y="224" width="1" height="26" fill="#fff"/><rect x="54" y="243" width="1" height="26" fill="#00ff00"/><rect x="53" y="250" width="3" height="4" fill="#00ff00"/><rect x="54" y="251" width="1" height="2" fill="#fff"/><rect x="58" y="223" width="1" height="55" fill="#00ff00"/><rect x="57" y="240" width="3" height="14" fill="#00ff00"/><rect x="58" y="241" width="1" height="12" fill="#000"/><rect x="62" y="224" width="1" height="40" fill="#00ff00"/><rect x="61" y="240" width="3" height="13" fill="#00ff00"/><rect x="62" y="241" width="1" height="11" fill="#fff"/><rect x="66" y="206" width="1" height="53" fill="#00ff00"/><rect x="65" y="242" width="3" height="11" fill="#00ff00"/><rect x="66" y="243" width="1" height="9" fill="#000"/><rect x="70" y="214" width="1" height="35" fill="#00ff00"/><rect x="69" y="231" width="3" height="12" fill="#00ff00"/><rect x="70" y="232" width="1" height="10" fill="#000"/><rect x="74" y="207" width="1" height="28" fill="#00ff00"/><rect x="73" y="222" width="3" height="10" fill="#00ff00"/><rect x="74" y="223" width="1" height="8" fill="#000"/><rect x="78" y="201" width="1" height="30" fill="#00ff00"/><rect x="77" y="222" width="3" height="6" fill="#00ff00"/><rect x="78" y="223" width="1" height="4" fill="#fff"/><rect x="82" y="196" width="1" height="35" fill="#00ff00"/><rect x="81" y="203" width="3" height="26" fill="#00ff00"/><rect x="82" y="204" width="1" height="24" fill="#000"/><rect x="86" y="195" width="1" height="15" fill="#00ff00"/><rect x="85" y="204" width="3" height="2" fill="#00ff00"/><rect x="90" y="190" width="1" height="17" fill="#00ff00"/><rect x="89" y="202" width="3" height="4" fill="#00ff00"/><rect x="90" y="203" width="1" height="2" fill="#000"/><rect x="94" y="179" width="1" height="34" fill="#00ff00"/><rect x="93" y="189" width="3" height="3" fill="#00ff00"/><rect x="94" y="190" width="1" height="1" fill="#fff"/><rect x="98" y="153" width="1" height="40" fill="#00ff00"/><rect x="97" y="166" width="3" height="26" fill="#00ff00"/><rect x="98" y="167" width="1" height="24" fill="#000"/><rect x="102" y="165" width="1" height="26" fill="#00ff00"/><rect x="101" y="166" width="3" height="17" fill="#00ff00"/><rect x="102" y="167" width="1" height="15" fill="#fff"/><rect x="106" y="153" width="1" height="35" fill="#00ff00"/><rect x="105" y="156" width="3" height="28" fill="#00ff00"/><rect x="106" y="157" width="1" height="26" fill="#000"/><rect x="110" y="149" width="1" height="17" fill="#00ff00"/><rect x="109" y="151" width="3" height="7" fill="#00ff00"/><rect x="110" y="152" width="1" height="5" fill="#000"/><rect x="114" y="136" width="1" height="18" fill="#00ff00"/><rect x="113" y="143" width="3" height="9" fill="#00ff00"/><rect x="114" y="144" width="1" height="7" fill="#000"/><rect x="118" y="136" width="1" height="13" fill="#00ff00"/><rect x="117" y="143" width="3" height="4" fill="#00ff00"/><rect x="118" y="144" width="1" height="2" fill="#fff"/><rect x="122" y="142" width="1" height="20" fill="#00ff00"/><rect x="121" y="146" width="3" height="15" fill="#00ff00"/><rect x="122" y="147" width="1" height="13" fill="#fff"/><rect x="126" y="145" width="1" height="18" fill="#00ff00"/><rect x="125" y="146" width="3" height="16" fill="#00ff00"/><rect x="126" y="147" width="1" height="14" fill="#000"/><rect x="130" y="130" width="1" height="40" fill="#00ff00"/><rect x="129" y="133" width="3" height="14" fill="#00ff00"/><rect x="130" y="134" width="1" height="12" fill="#000"/><rect x="134" y="103" width="1" height="39" fill="#00ff00"/><rect x="133" y="122" width="3" height="12" fill="#00ff00"/><rect x="134" y="123" width="1" height="10" fill="#000"/><rect x="138" y="118" width="1" height="62" fill="#00ff00"/><rect x="137" y="122" width="3" height="45" fill="#00ff00"/><rect x="138" y="123" width="1" height="43" fill="#fff"/><rect x="142" y="159" width="1" height="13" fill="#00ff00"/><rect x="141" y="167" width="3" height="2" fill="#00ff00"/><rect x="146" y="153" width="1" height="73" fill="#00ff00"/><rect x="145" y="170" width="3" height="45" fill="#00ff00"/><rect x="146" y="171" width="1" height="43" fill="#fff"/><rect x="150" y="152" width="1" height="76" fill="#00ff00"/><rect x="149" y="201" width="3" height="13" fill="#00ff00"/><rect x="150" y="202" width="1" height="11" fill="#000"/><rect x="154" y="197" width="1" height="64" fill="#00ff00"/><rect x="153" y="199" width="3" height="41" fill="#00ff00"/><rect x="154" y="200" width="1" height="39" fill="#fff"/><rect x="158" y="203" width="1" height="45" fill="#00ff00"/><rect x="157" y="222" width="3" height="19" fill="#00ff00"/><rect x="158" y="223" width="1" height="17" fill="#000"/><rect x="162" y="175" width="1" height="67" fill="#00ff00"/><rect x="161" y="195" width="3" height="27" fill="#00ff00"/><rect x="162" y="196" width="1" height="25" fill="#000"/><rect x="166" y="165" width="1" height="34" fill="#00ff00"/><rect x="165" y="170" width="3" height="28" fill="#00ff00"/><rect x="166" y="171" width="1" height="26" fill="#000"/><rect x="170" y="163" width="1" height="22" fill="#00ff00"/><rect x="169" y="170" width="3" height="6" fill="#00ff00"/><rect x="170" y="171" width="1" height="4" fill="#fff"/><rect x="174" y="162" width="1" height="29" fill="#00ff00"/><rect x="173" y="176" width="3" height="7" fill="#00ff00"/><rect x="174" y="177" width="1" height="5" fill="#fff"/><rect x="178" y="161" width="1" height="27" fill="#00ff00"/><rect x="177" y="173" width="3" height="10" fill="#00ff00"/><rect x="178" y="174" width="1" height="8" fill="#000"/><rect x="182" y="141" width="1" height="35" fill="#00ff00"/><rect x="181" y="143" width="3" height="32" fill="#00ff00"/><rect x="182" y="144" width="1" height="30" fill="#000"/><rect x="186" y="130" width="1" height="24" fill="#00ff00"/><rect x="185" y="143" width="3" height="9" fill="#00ff00"/><rect x="186" y="144" width="1" height="7" fill="#fff"/><rect x="190" y="132" width="1" height="22" fill="#00ff00"/><rect x="189" y="133" width="3" height="20" fill="#00ff00"/><rect x="190" y="134" width="1" height="18" fill="#000"/><rect x="194" y="119" width="1" height="20" fill="#00ff00"/><rect x="193" y="122" width="3" height="12" fill="#00ff00"/><rect x="194" y="123" width="1" height="10" fill="#000"/><rect x="198" y="103" width="1" height="23" fill="#00ff00"/><rect x="197" y="107" width="3" height="17" fill="#00ff00"/><rect x="198" y="108" width="1" height="15" fill="#000"/><rect x="202" y="100" width="1" height="23" fill="#00ff00"/><rect x="201" y="107" width="3" height="14" fill="#00ff00"/><rect x="202" y="108" width="1" height="12" fill="#fff"/><rect x="206" y="100" width="1" height="24" fill="#00ff00"/><rect x="205" y="111" width="3" height="11" fill="#00ff00"/><rect x="206" y="112" width="1" height="9" fill="#000"/><rect x="210" y="111" width="1" height="12" fill="#00ff00"/><rect x="209" y="113" width="3" height="7" fill="#00ff00"/><rect x="210" y="114" width="1" height="5" fill="#fff"/><rect x="214" y="117" width="1" height="11" fill="#00ff00"/><rect x="213" y="119" width="3" height="5" fill="#00ff00"/><rect x="214" y="120" width="1" height="3" fill="#fff"/><rect x="218" y="121" width="1" height="18" fill="#00ff00"/><rect x="217" y="122" width="3" height="11" fill="#00ff00"/><rect x="218" y="123" width="1" height="9" fill="#fff"/><rect x="222" y="123" width="1" height="22" fill="#00ff00"/><rect x="221" y="132" width="3" height="2" fill="#00ff00"/><rect x="226" y="122" width="1" height="42" fill="#00ff00"/><rect x="225" y="132" width="3" height="32" fill="#00ff00"/><rect x="226" y="133" width="1" height="30" fill="#fff"/><rect x="230" y="72" width="1" height="101" fill="#00ff00"/><rect x="229" y="77" width="3" height="87" fill="#00ff00"/><rect x="230" y="78" width="1" height="85" fill="#000"/><rect x="234" y="73" width="1" height="34" fill="#00ff00"/><rect x="233" y="77" width="3" height="19" fill="#00ff00"/><rect x="234" y="78" width="1" height="17" fill="#fff"/><rect x="238" y="72" width="1" height="32" fill="#00ff00"/><rect x="237" y="76" width="3" height="21" fill="#00ff00"/><rect x="238" y="77" width="1" height="19" fill="#000"/><rect x="242" y="42" width="1" height="35" fill="#00ff00"/><rect x="241" y="67" width="3" height="9" fill="#00ff00"/><rect x="242" y="68" width="1" height="7" fill="#000"/><rect x="246" y="54" width="1" height="47" fill="#00ff00"/><rect x="245" y="57" width="3" height="12" fill="#00ff00"/><rect x="246" y="58" width="1" height="10" fill="#000"/><rect x="250" y="18" width="1" height="41" fill="#00ff00"/><rect x="249" y="41" width="3" height="17" fill="#00ff00"/><rect x="250" y="42" width="1" height="15" fill="#000"/><rect x="254" y="41" width="1" height="60" fill="#00ff00"/><rect x="253" y="41" width="3" height="43" fill="#00ff00"/><rect x="254" y="42" width="1" height="41" fill="#fff"/><rect x="258" y="70" width="1" height="60" fill="#00ff00"/><rect x="257" y="72" width="3" height="14" fill="#00ff00"/><rect x="258" y="73" width="1" height="12" fill="#000"/><rect x="262" y="70" width="1" height="49" fill="#00ff00"/><rect x="261" y="73" width="3" height="45" fill="#00ff00"/><rect x="262" y="74" width="1" height="43" fill="#fff"/><rect x="266" y="96" width="1" height="34" fill="#00ff00"/><rect x="265" y="111" width="3" height="7" fill="#00ff00"/><rect x="266" y="112" width="1" height="5" fill="#000"/><rect x="270" y="93" width="1" height="21" fill="#00ff00"/><rect x="269" y="97" width="3" height="15" fill="#00ff00"/><rect x="270" y="98" width="1" height="13" fill="#000"/><rect x="274" y="91" width="1" height="19" fill="#00ff00"/><rect x="273" y="97" width="3" height="7" fill="#00ff00"/><rect x="274" y="98" width="1" height="5" fill="#fff"/><rect x="278" y="100" width="1" height="17" fill="#00ff00"/><rect x="277" y="103" width="3" height="6" fill="#00ff00"/><rect x="278" y="104" width="1" height="4" fill="#000"/><rect x="282" y="101" width="1" height="19" fill="#00ff00"/><rect x="281" y="104" width="3" height="12" fill="#00ff00"/><rect x="282" y="105" width="1" height="10" fill="#fff"/><rect x="286" y="104" width="1" height="16" fill="#00ff00"/><rect x="285" y="113" width="3" height="2" fill="#00ff00"/><rect x="290" y="108" width="1" height="8" fill="#00ff00"/><rect x="289" y="109" width="3" height="5" fill="#00ff00"/><rect x="290" y="110" width="1" height="3" fill="#000"/><rect x="294" y="101" width="1" height="33" fill="#00ff00"/><rect x="293" y="111" width="3" height="14" fill="#00ff00"/><rect x="294" y="112" width="1" height="12" fill="#fff"/><rect x="298" y="121" width="1" height="29" fill="#00ff00"/><rect x="297" y="124" width="3" height="13" fill="#00ff00"/><rect x="298" y="125" width="1" height="11" fill="#fff"/><rect x="302" y="121" width="1" height="20" fill="#00ff00"/><rect x="301" y="123" width="3" height="14" fill="#00ff00"/><rect x="302" y="124" width="1" height="12" fill="#000"/><rect x="306" y="111" width="1" height="15" fill="#00ff00"/><rect x="305" y="113" width="3" height="11" fill="#00ff00"/><rect x="306" y="114" width="1" height="9" fill="#000"/><rect x="310" y="89" width="1" height="31" fill="#00ff00"/><rect x="309" y="95" width="3" height="19" fill="#00ff00"/><rect x="310" y="96" width="1" height="17" fill="#000"/><rect x="314" y="68" width="1" height="32" fill="#00ff00"/><rect x="313" y="79" width="3" height="17" fill="#00ff00"/><rect x="314" y="80" width="1" height="15" fill="#000"/><rect x="318" y="65" width="1" height="28" fill="#00ff00"/><rect x="317" y="68" width="3" height="12" fill="#00ff00"/><rect x="318" y="69" width="1" height="10" fill="#000"/><rect x="322" y="39" width="1" height="34" fill="#00ff00"/><rect x="321" y="51" width="3" height="18" fill="#00ff00"/><rect x="322" y="52" width="1" height="16" fill="#000"/><rect x="326" y="25" width="1" height="47" fill="#00ff00"/><rect x="325" y="51" width="3" height="14" fill="#00ff00"/><rect x="326" y="52" width="1" height="12" fill="#fff"/><rect x="330" y="31" width="1" height="41" fill="#00ff00"/><rect x="329" y="34" width="3" height="33" fill="#00ff00"/><rect x="330" y="35" width="1" height="31" fill="#000"/><rect x="334" y="34" width="1" height="51" fill="#00ff00"/><rect x="333" y="34" width="3" height="35" fill="#00ff00"/><rect x="334" y="35" width="1" height="33" fill="#fff"/><rect x="338" y="62" width="1" height="30" fill="#00ff00"/><rect x="337" y="68" width="3" height="15" fill="#00ff00"/><rect x="338" y="69" width="1" height="13" fill="#fff"/><rect x="342" y="82" width="1" height="34" fill="#00ff00"/><rect x="341" y="82" width="3" height="17" fill="#00ff00"/><rect x="342" y="83" width="1" height="15" fill="#fff"/><rect x="346" y="97" width="1" height="50" fill="#00ff00"/><rect x="345" y="97" width="3" height="26" fill="#00ff00"/><rect x="346" y="98" width="1" height="24" fill="#fff"/><rect x="350" y="81" width="1" height="58" fill="#00ff00"/><rect x="349" y="103" width="3" height="20" fill="#00ff00"/><rect x="350" y="104" width="1" height="18" fill="#000"/><rect x="354" y="68" width="1" height="37" fill="#00ff00"/><rect x="353" y="74" width="3" height="30" fill="#00ff00"/><rect x="354" y="75" width="1" height="28" fill="#000"/><rect x="358" y="69" width="1" height="45" fill="#00ff00"/><rect x="357" y="74" width="3" height="20" fill="#00ff00"/><rect x="358" y="75" width="1" height="18" fill="#fff"/><rect x="362" y="83" width="1" height="26" fill="#00ff00"/><rect x="361" y="90" width="3" height="4" fill="#00ff00"/><rect x="362" y="91" width="1" height="2" fill="#000"/><rect x="366" y="89" width="1" height="20" fill="#00ff00"/><rect x="365" y="90" width="3" height="15" fill="#00ff00"/><rect x="366" y="91" width="1" height="13" fill="#fff"/><rect x="370" y="97" width="1" height="28" fill="#00ff00"/><rect x="369" y="104" width="3" height="5" fill="#00ff00"/><rect x="370" y="105" width="1" height="3" fill="#fff"/><rect x="374" y="98" width="1" height="45" fill="#00ff00"/><rect x="373" y="108" width="3" height="35" fill="#00ff00"/><rect x="374" y="109" width="1" height="33" fill="#fff"/><rect x="378" y="131" width="1" height="23" fill="#00ff00"/><rect x="377" y="141" width="3" height="5" fill="#00ff00"/><rect x="378" y="142" width="1" height="3" fill="#fff"/><rect x="382" y="132" width="1" height="20" fill="#00ff00"/><rect x="381" y="145" width="3" height="3" fill="#00ff00"/><rect x="382" y="146" width="1" height="1" fill="#fff"/><rect x="386" y="140" width="1" height="28" fill="#00ff00"/><rect x="385" y="146" width="3" height="20" fill="#00ff00"/><rect x="386" y="147" width="1" height="18" fill="#fff"/><rect x="390" y="165" width="1" height="42" fill="#00ff00"/><rect x="389" y="165" width="3" height="26" fill="#00ff00"/><rect x="390" y="166" width="1" height="24" fill="#fff"/><rect x="394" y="169" width="1" height="33" fill="#00ff00"/><rect x="393" y="171" width="3" height="20" fill="#00ff00"/><rect x="394" y="172" width="1" height="18" fill="#000"/><rect x="398" y="147" width="1" height="27" fill="#00ff00"/><rect x="397" y="164" width="3" height="10" fill="#00ff00"/><rect x="398" y="165" width="1" height="8" fill="#000"/><rect x="402" y="156" width="1" height="24" fill="#00ff00"/><rect x="401" y="164" width="3" height="11" fill="#00ff00"/><rect x="402" y="165" width="1" height="9" fill="#fff"/><rect x="406" y="156" width="1" height="23" fill="#00ff00"/><rect x="405" y="159" width="3" height="16" fill="#00ff00"/><rect x="406" y="160" width="1" height="14" fill="#000"/><rect x="410" y="143" width="1" height="23" fill="#00ff00"/><rect x="409" y="149" width="3" height="11" fill="#00ff00"/><rect x="410" y="150" width="1" height="9" fill="#000"/><rect x="414" y="145" width="1" height="20" fill="#00ff00"/><rect x="413" y="148" width="3" height="2" fill="#00ff00"/><rect x="418" y="142" width="1" height="33" fill="#00ff00"/><rect x="417" y="148" width="3" height="21" fill="#00ff00"/><rect x="418" y="149" width="1" height="19" fill="#fff"/><rect x="422" y="151" width="1" height="87" fill="#00ff00"/><rect x="421" y="168" width="3" height="54" fill="#00ff00"/><rect x="422" y="169" width="1" height="52" fill="#fff"/><rect x="426" y="195" width="1" height="41" fill="#00ff00"/><rect x="425" y="213" width="3" height="10" fill="#00ff00"/><rect x="426" y="214" width="1" height="8" fill="#000"/><rect x="430" y="204" width="1" height="51" fill="#00ff00"/><rect x="429" y="214" width="3" height="8" fill="#00ff00"/><rect x="430" y="215" width="1" height="6" fill="#fff"/><rect x="434" y="185" width="1" height="48" fill="#00ff00"/><rect x="433" y="186" width="3" height="34" fill="#00ff00"/><rect x="434" y="187" width="1" height="32" fill="#000"/><rect x="438" y="176" width="1" height="30" fill="#00ff00"/><rect x="437" y="187" width="3" height="8" fill="#00ff00"/><rect x="438" y="188" width="1" height="6" fill="#fff"/><rect x="442" y="191" width="1" height="29" fill="#00ff00"/><rect x="441" y="192" width="3" height="20" fill="#00ff00"/><rect x="442" y="193" width="1" height="18" fill="#fff"/><rect x="446" y="194" width="1" height="55" fill="#00ff00"/><rect x="445" y="215" width="3" height="2" fill="#00ff00"/><rect x="450" y="163" width="1" height="55" fill="#00ff00"/><rect x="449" y="182" width="3" height="27" fill="#00ff00"/><rect x="450" y="183" width="1" height="25" fill="#000"/><rect x="454" y="167" width="1" height="31" fill="#00ff00"/><rect x="453" y="174" width="3" height="9" fill="#00ff00"/><rect x="454" y="175" width="1" height="7" fill="#000"/><rect x="458" y="148" width="1" height="33" fill="#00ff00"/><rect x="457" y="161" width="3" height="14" fill="#00ff00"/><rect x="458" y="162" width="1" height="12" fill="#000"/><rect x="462" y="138" width="1" height="25" fill="#00ff00"/><rect x="461" y="139" width="3" height="23" fill="#00ff00"/><rect x="462" y="140" width="1" height="21" fill="#000"/><rect x="466" y="71" width="1" height="72" fill="#00ff00"/><rect x="465" y="72" width="3" height="69" fill="#00ff00"/><rect x="466" y="73" width="1" height="67" fill="#000"/><rect x="470" y="57" width="1" height="22" fill="#00ff00"/><rect x="469" y="63" width="3" height="11" fill="#00ff00"/><rect x="470" y="64" width="1" height="9" fill="#000"/><rect x="474" y="52" width="1" height="32" fill="#00ff00"/><rect x="473" y="62" width="3" height="21" fill="#00ff00"/><rect x="474" y="63" width="1" height="19" fill="#fff"/><rect x="478" y="75" width="1" height="24" fill="#00ff00"/><rect x="477" y="87" width="3" height="7" fill="#00ff00"/><rect x="478" y="88" width="1" height="5" fill="#fff"/><rect x="482" y="81" width="1" height="25" fill="#00ff00"/><rect x="481" y="88" width="3" height="16" fill="#00ff00"/><rect x="482" y="89" width="1" height="14" fill="#fff"/><rect x="486" y="74" width="1" height="31" fill="#00ff00"/><rect x="485" y="75" width="3" height="29" fill="#00ff00"/><rect x="486" y="76" width="1" height="27" fill="#000"/><rect x="490" y="64" width="1" height="15" fill="#00ff00"/><rect x="489" y="69" width="3" height="7" fill="#00ff00"/><rect x="490" y="70" width="1" height="5" fill="#000"/><rect x="494" y="67" width="1" height="23" fill="#00ff00"/><rect x="493" y="68" width="3" height="14" fill="#00ff00"/><rect x="494" y="69" width="1" height="12" fill="#fff"/><rect x="498" y="62" width="1" height="22" fill="#00ff00"/><rect x="497" y="72" width="3" height="10" fill="#00ff00"/><rect x="498" y="73" width="1" height="8" fill="#000"/><rect x="502" y="40" width="1" height="37" fill="#00ff00"/><rect x="501" y="45" width="3" height="28" fill="#00ff00"/><rect x="502" y="46" width="1" height="26" fill="#000"/><rect x="506" y="25" width="1" height="32" fill="#00ff00"/><rect x="505" y="45" width="3" height="3" fill="#00ff00"/><rect x="506" y="46" width="1" height="1" fill="#fff"/><rect x="510" y="32" width="1" height="26" fill="#00ff00"/><rect x="509" y="47" width="3" height="2" fill="#00ff00"/><rect x="514" y="39" width="1" height="64" fill="#00ff00"/><rect x="513" y="48" width="3" height="43" fill="#00ff00"/><rect x="514" y="49" width="1" height="41" fill="#fff"/><rect x="518" y="77" width="1" height="21" fill="#00ff00"/><rect x="517" y="84" width="3" height="7" fill="#00ff00"/><rect x="518" y="85" width="1" height="5" fill="#000"/><path d="M2.5 313V2.5H524.5V313" stroke="#fff" fill="none"/><path d="M2 313.5H525" stroke="#fff"/><path d="M2.5 313V318" stroke="#fff"/><path d="M130.5 313V318" stroke="#fff"/><path d="M258.5 313V318" stroke="#fff"/><path d="M386.5 313V318" stroke="#fff"/><path d="M514.5 313V318" stroke="#fff"/><path d="M524 25.5H529" stroke="#fff"/><path d="M524 57.5H529" stroke="#fff"/><path d="M524 89.5H529" stroke="#fff"/><path d="M524 121.5H529" stroke="#fff"/><path d="M524 153.5H529" stroke="#fff"/><path d="M524 185.5H529" stroke="#fff"/><path d="M524 217.5H529" stroke="#fff"/><path d="M524 249.5H529" stroke="#fff"/><path d="M524 281.5H529" stroke="#fff"/></svg><div class="t" style="left:730px;top:167px;font-size:12.5px;color:#fff;letter-spacing:0.5px">1.18905</div><div class="t" style="left:730px;top:199px;font-size:12.5px;color:#fff;letter-spacing:0.5px">1.18800</div><div class="t" style="left:730px;top:231px;font-size:12.5px;color:#fff;letter-spacing:0.5px">1.18695</div><div class="t" style="left:730px;top:263px;font-size:12.5px;color:#fff;letter-spacing:0.5px">1.18590</div><div class="t" style="left:730px;top:295px;font-size:12.5px;color:#fff;letter-spacing:0.5px">1.18485</div><div class="t" style="left:730px;top:327px;font-size:12.5px;color:#fff;letter-spacing:0.5px">1.18380</div><div class="t" style="left:730px;top:359px;font-size:12.5px;color:#fff;letter-spacing:0.5px">1.18275</div><div class="t" style="left:730px;top:391px;font-size:12.5px;color:#fff;letter-spacing:0.5px">1.18170</div><div class="t" style="left:730px;top:423px;font-size:12.5px;color:#fff;letter-spacing:0.5px">1.18065</div><div class="t" style="left:202px;top:466px;font-size:12.5px;color:#fff;letter-spacing:0.2px">13 Nov 2020</div><div class="t" style="left:330px;top:466px;font-size:12.5px;color:#fff;letter-spacing:0.2px">16 Nov 09:00</div><div class="t" style="left:458px;top:466px;font-size:12.5px;color:#fff;letter-spacing:0.2px">17 Nov 17:00</div><div class="t" style="left:586px;top:466px;font-size:12.5px;color:#fff;letter-spacing:0.2px">19 Nov 01:00</div><div class="t" style="left:674px;top:466px;width:117px;text-align:right;font-size:12.5px;color:#fff;letter-spacing:0.2px">20 Nov 09:00</div><svg style="left:206px;top:153px" width="20" height="16"><rect x="0.5" y="1" width="19" height="15" rx="1.5" fill="#eef2f8"/><rect x="0.5" y="0" width="19" height="3.5" rx="1" fill="#8a8af8"/><path d="M3 5.5H9.5M3 8H9.5M3 10.5H9.5M3 13H9.5" stroke="#e86060" stroke-width="1.3"/><path d="M10.5 5.5H17M10.5 8H17M10.5 10.5H17M10.5 13H17" stroke="#7a7af0" stroke-width="1.3"/></svg><div class="t" style="left:233px;top:156px;font-size:13px;color:#fff;letter-spacing:-0.6px">EURUSD, H1:&nbsp; Euro vs US Dollar</div><div class="a" style="left:727px;top:224px;width:54px;height:14px;background:#778899"></div><div class="t" style="left:730px;top:226px;font-size:12.5px;color:#000;letter-spacing:0.5px">1.18712</div><svg style="left:810px;top:147px;overflow:hidden" width="594" height="331" shape-rendering="crispEdges"><rect x="0" y="0" width="594" height="331" fill="#000"/><path d="M34.5 3V313M66.5 3V313M98.5 3V313M130.5 3V313M162.5 3V313M194.5 3V313M226.5 3V313M258.5 3V313M290.5 3V313M322.5 3V313M354.5 3V313M386.5 3V313M418.5 3V313M450.5 3V313M482.5 3V313M514.5 3V313M3 22.5H524M3 54.5H524M3 87.5H524M3 119.5H524M3 151.5H524M3 184.5H524M3 216.5H524M3 248.5H524M3 281.5H524" stroke="#7f8fa0" stroke-width="1" stroke-dasharray="3 3" fill="none"/><rect x="3" y="143" width="521" height="1" fill="#778899"/><rect x="2" y="147" width="1" height="39" fill="#00ff00"/><rect x="0" y="149" width="5" height="35" fill="#00ff00"/><rect x="1" y="150" width="3" height="33" fill="#fff"/><rect x="10" y="166" width="1" height="32" fill="#00ff00"/><rect x="8" y="182" width="5" height="12" fill="#00ff00"/><rect x="9" y="183" width="3" height="10" fill="#fff"/><rect x="18" y="173" width="1" height="27" fill="#00ff00"/><rect x="16" y="178" width="5" height="16" fill="#00ff00"/><rect x="17" y="179" width="3" height="14" fill="#000"/><rect x="26" y="145" width="1" height="41" fill="#00ff00"/><rect x="24" y="148" width="5" height="31" fill="#00ff00"/><rect x="25" y="149" width="3" height="29" fill="#000"/><rect x="34" y="147" width="1" height="29" fill="#00ff00"/><rect x="32" y="149" width="5" height="19" fill="#00ff00"/><rect x="33" y="150" width="3" height="17" fill="#fff"/><rect x="42" y="151" width="1" height="38" fill="#00ff00"/><rect x="40" y="166" width="5" height="22" fill="#00ff00"/><rect x="41" y="167" width="3" height="20" fill="#fff"/><rect x="50" y="136" width="1" height="67" fill="#00ff00"/><rect x="48" y="144" width="5" height="44" fill="#00ff00"/><rect x="49" y="145" width="3" height="42" fill="#000"/><rect x="58" y="140" width="1" height="24" fill="#00ff00"/><rect x="56" y="141" width="5" height="15" fill="#00ff00"/><rect x="57" y="142" width="3" height="13" fill="#fff"/><rect x="66" y="142" width="1" height="39" fill="#00ff00"/><rect x="64" y="155" width="5" height="20" fill="#00ff00"/><rect x="65" y="156" width="3" height="18" fill="#fff"/><rect x="74" y="163" width="1" height="26" fill="#00ff00"/><rect x="72" y="175" width="5" height="4" fill="#00ff00"/><rect x="73" y="176" width="3" height="2" fill="#fff"/><rect x="82" y="157" width="1" height="25" fill="#00ff00"/><rect x="80" y="169" width="5" height="9" fill="#00ff00"/><rect x="81" y="170" width="3" height="7" fill="#000"/><rect x="90" y="157" width="1" height="22" fill="#00ff00"/><rect x="88" y="159" width="5" height="11" fill="#00ff00"/><rect x="89" y="160" width="3" height="9" fill="#000"/><rect x="98" y="140" width="1" height="27" fill="#00ff00"/><rect x="96" y="143" width="5" height="17" fill="#00ff00"/><rect x="97" y="144" width="3" height="15" fill="#000"/><rect x="106" y="120" width="1" height="33" fill="#00ff00"/><rect x="104" y="129" width="5" height="15" fill="#00ff00"/><rect x="105" y="130" width="3" height="13" fill="#000"/><rect x="114" y="127" width="1" height="30" fill="#00ff00"/><rect x="112" y="129" width="5" height="16" fill="#00ff00"/><rect x="113" y="130" width="3" height="14" fill="#fff"/><rect x="122" y="96" width="1" height="47" fill="#00ff00"/><rect x="120" y="105" width="5" height="37" fill="#00ff00"/><rect x="121" y="106" width="3" height="35" fill="#000"/><rect x="130" y="67" width="1" height="49" fill="#00ff00"/><rect x="128" y="92" width="5" height="13" fill="#00ff00"/><rect x="129" y="93" width="3" height="11" fill="#000"/><rect x="138" y="53" width="1" height="47" fill="#00ff00"/><rect x="136" y="67" width="5" height="25" fill="#00ff00"/><rect x="137" y="68" width="3" height="23" fill="#000"/><rect x="146" y="61" width="1" height="27" fill="#00ff00"/><rect x="144" y="67" width="5" height="2" fill="#00ff00"/><rect x="154" y="61" width="1" height="49" fill="#00ff00"/><rect x="152" y="68" width="5" height="32" fill="#00ff00"/><rect x="153" y="69" width="3" height="30" fill="#fff"/><rect x="162" y="87" width="1" height="51" fill="#00ff00"/><rect x="160" y="99" width="5" height="7" fill="#00ff00"/><rect x="161" y="100" width="3" height="5" fill="#fff"/><rect x="170" y="96" width="1" height="45" fill="#00ff00"/><rect x="168" y="104" width="5" height="6" fill="#00ff00"/><rect x="169" y="105" width="3" height="4" fill="#fff"/><rect x="178" y="58" width="1" height="66" fill="#00ff00"/><rect x="176" y="62" width="5" height="48" fill="#00ff00"/><rect x="177" y="63" width="3" height="46" fill="#000"/><rect x="186" y="17" width="1" height="51" fill="#00ff00"/><rect x="184" y="40" width="5" height="24" fill="#00ff00"/><rect x="185" y="41" width="3" height="22" fill="#000"/><rect x="194" y="34" width="1" height="37" fill="#00ff00"/><rect x="192" y="40" width="5" height="12" fill="#00ff00"/><rect x="193" y="41" width="3" height="10" fill="#fff"/><rect x="202" y="48" width="1" height="44" fill="#00ff00"/><rect x="200" y="51" width="5" height="24" fill="#00ff00"/><rect x="201" y="52" width="3" height="22" fill="#fff"/><rect x="210" y="70" width="1" height="24" fill="#00ff00"/><rect x="208" y="74" width="5" height="10" fill="#00ff00"/><rect x="209" y="75" width="3" height="8" fill="#fff"/><rect x="218" y="75" width="1" height="34" fill="#00ff00"/><rect x="216" y="83" width="5" height="9" fill="#00ff00"/><rect x="217" y="84" width="3" height="7" fill="#fff"/><rect x="226" y="87" width="1" height="46" fill="#00ff00"/><rect x="224" y="91" width="5" height="34" fill="#00ff00"/><rect x="225" y="92" width="3" height="32" fill="#fff"/><rect x="234" y="113" width="1" height="21" fill="#00ff00"/><rect x="232" y="124" width="5" height="4" fill="#00ff00"/><rect x="233" y="125" width="3" height="2" fill="#fff"/><rect x="242" y="118" width="1" height="20" fill="#00ff00"/><rect x="240" y="126" width="5" height="6" fill="#00ff00"/><rect x="241" y="127" width="3" height="4" fill="#fff"/><rect x="250" y="121" width="1" height="48" fill="#00ff00"/><rect x="248" y="131" width="5" height="37" fill="#00ff00"/><rect x="249" y="132" width="3" height="35" fill="#fff"/><rect x="258" y="166" width="1" height="56" fill="#00ff00"/><rect x="256" y="167" width="5" height="50" fill="#00ff00"/><rect x="257" y="168" width="3" height="48" fill="#fff"/><rect x="266" y="200" width="1" height="32" fill="#00ff00"/><rect x="264" y="203" width="5" height="13" fill="#00ff00"/><rect x="265" y="204" width="3" height="11" fill="#000"/><rect x="274" y="183" width="1" height="22" fill="#00ff00"/><rect x="272" y="199" width="5" height="5" fill="#00ff00"/><rect x="273" y="200" width="3" height="3" fill="#000"/><rect x="282" y="195" width="1" height="41" fill="#00ff00"/><rect x="280" y="199" width="5" height="32" fill="#00ff00"/><rect x="281" y="200" width="3" height="30" fill="#fff"/><rect x="290" y="207" width="1" height="29" fill="#00ff00"/><rect x="288" y="211" width="5" height="20" fill="#00ff00"/><rect x="289" y="212" width="3" height="18" fill="#000"/><rect x="298" y="199" width="1" height="36" fill="#00ff00"/><rect x="296" y="207" width="5" height="5" fill="#00ff00"/><rect x="297" y="208" width="3" height="3" fill="#000"/><rect x="306" y="193" width="1" height="41" fill="#00ff00"/><rect x="304" y="196" width="5" height="12" fill="#00ff00"/><rect x="305" y="197" width="3" height="10" fill="#000"/><rect x="314" y="173" width="1" height="59" fill="#00ff00"/><rect x="312" y="197" width="5" height="16" fill="#00ff00"/><rect x="313" y="198" width="3" height="14" fill="#fff"/><rect x="322" y="200" width="1" height="85" fill="#00ff00"/><rect x="320" y="212" width="5" height="60" fill="#00ff00"/><rect x="321" y="213" width="3" height="58" fill="#fff"/><rect x="330" y="229" width="1" height="55" fill="#00ff00"/><rect x="328" y="270" width="5" height="2" fill="#00ff00"/><rect x="338" y="155" width="1" height="127" fill="#00ff00"/><rect x="336" y="186" width="5" height="87" fill="#00ff00"/><rect x="337" y="187" width="3" height="85" fill="#000"/><rect x="346" y="135" width="1" height="89" fill="#00ff00"/><rect x="344" y="158" width="5" height="29" fill="#00ff00"/><rect x="345" y="159" width="3" height="27" fill="#000"/><rect x="354" y="152" width="1" height="65" fill="#00ff00"/><rect x="352" y="159" width="5" height="58" fill="#00ff00"/><rect x="353" y="160" width="3" height="56" fill="#fff"/><rect x="362" y="192" width="1" height="69" fill="#00ff00"/><rect x="360" y="216" width="5" height="10" fill="#00ff00"/><rect x="361" y="217" width="3" height="8" fill="#fff"/><rect x="370" y="223" width="1" height="84" fill="#00ff00"/><rect x="368" y="224" width="5" height="20" fill="#00ff00"/><rect x="369" y="225" width="3" height="18" fill="#fff"/><rect x="378" y="195" width="1" height="80" fill="#00ff00"/><rect x="376" y="230" width="5" height="13" fill="#00ff00"/><rect x="377" y="231" width="3" height="11" fill="#000"/><rect x="386" y="214" width="1" height="52" fill="#00ff00"/><rect x="384" y="230" width="5" height="5" fill="#00ff00"/><rect x="385" y="231" width="3" height="3" fill="#fff"/><rect x="394" y="202" width="1" height="40" fill="#00ff00"/><rect x="392" y="207" width="5" height="29" fill="#00ff00"/><rect x="393" y="208" width="3" height="27" fill="#000"/><rect x="402" y="172" width="1" height="43" fill="#00ff00"/><rect x="400" y="175" width="5" height="33" fill="#00ff00"/><rect x="401" y="176" width="3" height="31" fill="#000"/><rect x="410" y="149" width="1" height="35" fill="#00ff00"/><rect x="408" y="159" width="5" height="17" fill="#00ff00"/><rect x="409" y="160" width="3" height="15" fill="#000"/><rect x="418" y="97" width="1" height="82" fill="#00ff00"/><rect x="416" y="110" width="5" height="49" fill="#00ff00"/><rect x="417" y="111" width="3" height="47" fill="#000"/><rect x="426" y="108" width="1" height="52" fill="#00ff00"/><rect x="424" y="110" width="5" height="50" fill="#00ff00"/><rect x="425" y="111" width="3" height="48" fill="#fff"/><rect x="434" y="138" width="1" height="43" fill="#00ff00"/><rect x="432" y="143" width="5" height="33" fill="#00ff00"/><rect x="433" y="144" width="3" height="31" fill="#fff"/><rect x="442" y="161" width="1" height="18" fill="#00ff00"/><rect x="440" y="175" width="5" height="4" fill="#00ff00"/><rect x="441" y="176" width="3" height="2" fill="#fff"/><rect x="450" y="159" width="1" height="20" fill="#00ff00"/><rect x="448" y="162" width="5" height="16" fill="#00ff00"/><rect x="449" y="163" width="3" height="14" fill="#000"/><rect x="458" y="144" width="1" height="20" fill="#00ff00"/><rect x="456" y="149" width="5" height="13" fill="#00ff00"/><rect x="457" y="150" width="3" height="11" fill="#000"/><rect x="466" y="147" width="1" height="19" fill="#00ff00"/><rect x="464" y="149" width="5" height="11" fill="#00ff00"/><rect x="465" y="150" width="3" height="9" fill="#fff"/><rect x="474" y="121" width="1" height="39" fill="#00ff00"/><rect x="472" y="138" width="5" height="22" fill="#00ff00"/><rect x="473" y="139" width="3" height="20" fill="#000"/><rect x="482" y="104" width="1" height="37" fill="#00ff00"/><rect x="480" y="107" width="5" height="33" fill="#00ff00"/><rect x="481" y="108" width="3" height="31" fill="#000"/><rect x="490" y="87" width="1" height="34" fill="#00ff00"/><rect x="488" y="99" width="5" height="9" fill="#00ff00"/><rect x="489" y="100" width="3" height="7" fill="#000"/><rect x="498" y="84" width="1" height="24" fill="#00ff00"/><rect x="496" y="96" width="5" height="4" fill="#00ff00"/><rect x="497" y="97" width="3" height="2" fill="#000"/><rect x="506" y="77" width="1" height="93" fill="#00ff00"/><rect x="504" y="97" width="5" height="57" fill="#00ff00"/><rect x="505" y="98" width="3" height="55" fill="#fff"/><rect x="514" y="135" width="1" height="40" fill="#00ff00"/><rect x="512" y="143" width="5" height="11" fill="#00ff00"/><rect x="513" y="144" width="3" height="9" fill="#000"/><path d="M2.5 313V2.5H524.5V313" stroke="#fff" fill="none"/><path d="M2 313.5H525" stroke="#fff"/><path d="M2.5 313V318" stroke="#fff"/><path d="M130.5 313V318" stroke="#fff"/><path d="M258.5 313V318" stroke="#fff"/><path d="M386.5 313V318" stroke="#fff"/><path d="M514.5 313V318" stroke="#fff"/><path d="M524 22.5H529" stroke="#fff"/><path d="M524 54.5H529" stroke="#fff"/><path d="M524 87.5H529" stroke="#fff"/><path d="M524 119.5H529" stroke="#fff"/><path d="M524 151.5H529" stroke="#fff"/><path d="M524 184.5H529" stroke="#fff"/><path d="M524 216.5H529" stroke="#fff"/><path d="M524 248.5H529" stroke="#fff"/><path d="M524 281.5H529" stroke="#fff"/></svg><div class="t" style="left:1340px;top:164px;font-size:12.5px;color:#fff;letter-spacing:0.5px">1.33090</div><div class="t" style="left:1340px;top:196px;font-size:12.5px;color:#fff;letter-spacing:0.5px">1.32960</div><div class="t" style="left:1340px;top:229px;font-size:12.5px;color:#fff;letter-spacing:0.5px">1.32830</div><div class="t" style="left:1340px;top:261px;font-size:12.5px;color:#fff;letter-spacing:0.5px">1.32700</div><div class="t" style="left:1340px;top:293px;font-size:12.5px;color:#fff;letter-spacing:0.5px">1.32570</div><div class="t" style="left:1340px;top:326px;font-size:12.5px;color:#fff;letter-spacing:0.5px">1.32440</div><div class="t" style="left:1340px;top:358px;font-size:12.5px;color:#fff;letter-spacing:0.5px">1.32310</div><div class="t" style="left:1340px;top:390px;font-size:12.5px;color:#fff;letter-spacing:0.5px">1.32180</div><div class="t" style="left:1340px;top:423px;font-size:12.5px;color:#fff;letter-spacing:0.5px">1.32050</div><div class="t" style="left:812px;top:466px;font-size:12.5px;color:#fff;letter-spacing:0.2px">17 Nov 2020</div><div class="t" style="left:940px;top:466px;font-size:12.5px;color:#fff;letter-spacing:0.2px">18 Nov 10:00</div><div class="t" style="left:1068px;top:466px;font-size:12.5px;color:#fff;letter-spacing:0.2px">19 Nov 02:00</div><div class="t" style="left:1196px;top:466px;font-size:12.5px;color:#fff;letter-spacing:0.2px">19 Nov 18:00</div><div class="t" style="left:1284px;top:466px;width:117px;text-align:right;font-size:12.5px;color:#fff;letter-spacing:0.2px">20 Nov 10:00</div><svg style="left:816px;top:153px" width="20" height="16"><rect x="0.5" y="1" width="19" height="15" rx="1.5" fill="#eef2f8"/><rect x="0.5" y="0" width="19" height="3.5" rx="1" fill="#8a8af8"/><path d="M3 5.5H9.5M3 8H9.5M3 10.5H9.5M3 13H9.5" stroke="#e86060" stroke-width="1.3"/><path d="M10.5 5.5H17M10.5 8H17M10.5 10.5H17M10.5 13H17" stroke="#7a7af0" stroke-width="1.3"/></svg><div class="t" style="left:843px;top:156px;font-size:13px;color:#fff;letter-spacing:-0.6px">GBPUSD, H1:&nbsp; Great Britain Pound vs US Dollar</div><div class="a" style="left:1337px;top:283px;width:54px;height:14px;background:#778899"></div><div class="t" style="left:1340px;top:285px;font-size:12.5px;color:#000;letter-spacing:0.5px">1.32603</div><svg style="left:200px;top:523px;overflow:hidden" width="594" height="191" shape-rendering="crispEdges"><rect x="0" y="0" width="594" height="191" fill="#000"/><path d="M34.5 3V191M66.5 3V191M98.5 3V191M130.5 3V191M162.5 3V191M194.5 3V191M226.5 3V191M258.5 3V191M290.5 3V191M322.5 3V191M354.5 3V191M386.5 3V191M418.5 3V191M450.5 3V191M482.5 3V191M514.5 3V191M3 18.5H524M3 51.5H524M3 84.5H524M3 117.5H524M3 149.5H524M3 182.5H524" stroke="#7f8fa0" stroke-width="1" stroke-dasharray="3 3" fill="none"/><rect x="6" y="59" width="1" height="38" fill="#00ff00"/><rect x="5" y="62" width="1" height="1" fill="#00ff00"/><rect x="7" y="64" width="1" height="1" fill="#00ff00"/><rect x="10" y="74" width="1" height="22" fill="#00ff00"/><rect x="9" y="76" width="1" height="1" fill="#00ff00"/><rect x="11" y="85" width="1" height="1" fill="#00ff00"/><rect x="14" y="64" width="1" height="18" fill="#00ff00"/><rect x="13" y="69" width="1" height="1" fill="#00ff00"/><rect x="15" y="73" width="1" height="1" fill="#00ff00"/><rect x="18" y="46" width="1" height="23" fill="#00ff00"/><rect x="17" y="54" width="1" height="1" fill="#00ff00"/><rect x="19" y="65" width="1" height="1" fill="#00ff00"/><rect x="22" y="50" width="1" height="16" fill="#00ff00"/><rect x="21" y="56" width="1" height="1" fill="#00ff00"/><rect x="23" y="51" width="1" height="1" fill="#00ff00"/><rect x="26" y="58" width="1" height="31" fill="#00ff00"/><rect x="25" y="76" width="1" height="1" fill="#00ff00"/><rect x="27" y="79" width="1" height="1" fill="#00ff00"/><rect x="30" y="64" width="1" height="24" fill="#00ff00"/><rect x="29" y="69" width="1" height="1" fill="#00ff00"/><rect x="31" y="77" width="1" height="1" fill="#00ff00"/><rect x="34" y="52" width="1" height="33" fill="#00ff00"/><rect x="33" y="77" width="1" height="1" fill="#00ff00"/><rect x="35" y="84" width="1" height="1" fill="#00ff00"/><rect x="38" y="20" width="1" height="60" fill="#00ff00"/><rect x="37" y="43" width="1" height="1" fill="#00ff00"/><rect x="39" y="54" width="1" height="1" fill="#00ff00"/><rect x="42" y="37" width="1" height="72" fill="#00ff00"/><rect x="41" y="93" width="1" height="1" fill="#00ff00"/><rect x="43" y="101" width="1" height="1" fill="#00ff00"/><rect x="46" y="73" width="1" height="40" fill="#00ff00"/><rect x="45" y="90" width="1" height="1" fill="#00ff00"/><rect x="47" y="75" width="1" height="1" fill="#00ff00"/><rect x="50" y="42" width="1" height="55" fill="#00ff00"/><rect x="49" y="43" width="1" height="1" fill="#00ff00"/><rect x="51" y="65" width="1" height="1" fill="#00ff00"/><rect x="54" y="33" width="1" height="44" fill="#00ff00"/><rect x="53" y="62" width="1" height="1" fill="#00ff00"/><rect x="55" y="53" width="1" height="1" fill="#00ff00"/><rect x="58" y="63" width="1" height="87" fill="#00ff00"/><rect x="57" y="111" width="1" height="1" fill="#00ff00"/><rect x="59" y="117" width="1" height="1" fill="#00ff00"/><rect x="62" y="98" width="1" height="43" fill="#00ff00"/><rect x="61" y="131" width="1" height="1" fill="#00ff00"/><rect x="63" y="108" width="1" height="1" fill="#00ff00"/><rect x="66" y="87" width="1" height="46" fill="#00ff00"/><rect x="65" y="122" width="1" height="1" fill="#00ff00"/><rect x="67" y="98" width="1" height="1" fill="#00ff00"/><rect x="70" y="104" width="1" height="38" fill="#00ff00"/><rect x="69" y="119" width="1" height="1" fill="#00ff00"/><rect x="71" y="118" width="1" height="1" fill="#00ff00"/><rect x="74" y="113" width="1" height="41" fill="#00ff00"/><rect x="73" y="114" width="1" height="1" fill="#00ff00"/><rect x="75" y="124" width="1" height="1" fill="#00ff00"/><rect x="78" y="106" width="1" height="35" fill="#00ff00"/><rect x="77" y="126" width="1" height="1" fill="#00ff00"/><rect x="79" y="117" width="1" height="1" fill="#00ff00"/><rect x="82" y="103" width="1" height="25" fill="#00ff00"/><rect x="81" y="107" width="1" height="1" fill="#00ff00"/><rect x="83" y="119" width="1" height="1" fill="#00ff00"/><rect x="86" y="117" width="1" height="23" fill="#00ff00"/><rect x="85" y="133" width="1" height="1" fill="#00ff00"/><rect x="87" y="128" width="1" height="1" fill="#00ff00"/><rect x="90" y="135" width="1" height="19" fill="#00ff00"/><rect x="89" y="151" width="1" height="1" fill="#00ff00"/><rect x="91" y="152" width="1" height="1" fill="#00ff00"/><rect x="94" y="145" width="1" height="28" fill="#00ff00"/><rect x="93" y="150" width="1" height="1" fill="#00ff00"/><rect x="95" y="159" width="1" height="1" fill="#00ff00"/><rect x="98" y="146" width="1" height="34" fill="#00ff00"/><rect x="97" y="172" width="1" height="1" fill="#00ff00"/><rect x="99" y="179" width="1" height="1" fill="#00ff00"/><rect x="102" y="155" width="1" height="21" fill="#00ff00"/><rect x="101" y="166" width="1" height="1" fill="#00ff00"/><rect x="103" y="173" width="1" height="1" fill="#00ff00"/><rect x="106" y="154" width="1" height="43" fill="#00ff00"/><rect x="105" y="176" width="1" height="1" fill="#00ff00"/><rect x="107" y="177" width="1" height="1" fill="#00ff00"/><rect x="110" y="174" width="1" height="23" fill="#00ff00"/><rect x="109" y="188" width="1" height="1" fill="#00ff00"/><rect x="111" y="179" width="1" height="1" fill="#00ff00"/><rect x="114" y="172" width="1" height="25" fill="#00ff00"/><rect x="113" y="196" width="1" height="1" fill="#00ff00"/><rect x="115" y="184" width="1" height="1" fill="#00ff00"/><rect x="118" y="180" width="1" height="17" fill="#00ff00"/><rect x="117" y="194" width="1" height="1" fill="#00ff00"/><rect x="119" y="196" width="1" height="1" fill="#00ff00"/><rect x="122" y="162" width="1" height="21" fill="#00ff00"/><rect x="121" y="169" width="1" height="1" fill="#00ff00"/><rect x="123" y="177" width="1" height="1" fill="#00ff00"/><rect x="126" y="163" width="1" height="22" fill="#00ff00"/><rect x="125" y="171" width="1" height="1" fill="#00ff00"/><rect x="127" y="178" width="1" height="1" fill="#00ff00"/><rect x="130" y="173" width="1" height="24" fill="#00ff00"/><rect x="129" y="189" width="1" height="1" fill="#00ff00"/><rect x="131" y="189" width="1" height="1" fill="#00ff00"/><rect x="142" y="174" width="1" height="23" fill="#00ff00"/><rect x="141" y="185" width="1" height="1" fill="#00ff00"/><rect x="143" y="195" width="1" height="1" fill="#00ff00"/><rect x="146" y="69" width="1" height="115" fill="#00ff00"/><rect x="145" y="182" width="1" height="1" fill="#00ff00"/><rect x="147" y="127" width="1" height="1" fill="#00ff00"/><rect x="150" y="72" width="1" height="70" fill="#00ff00"/><rect x="149" y="131" width="1" height="1" fill="#00ff00"/><rect x="151" y="116" width="1" height="1" fill="#00ff00"/><rect x="154" y="48" width="1" height="64" fill="#00ff00"/><rect x="153" y="106" width="1" height="1" fill="#00ff00"/><rect x="155" y="110" width="1" height="1" fill="#00ff00"/><rect x="158" y="74" width="1" height="68" fill="#00ff00"/><rect x="157" y="102" width="1" height="1" fill="#00ff00"/><rect x="159" y="115" width="1" height="1" fill="#00ff00"/><rect x="162" y="110" width="1" height="67" fill="#00ff00"/><rect x="161" y="131" width="1" height="1" fill="#00ff00"/><rect x="163" y="144" width="1" height="1" fill="#00ff00"/><rect x="166" y="149" width="1" height="38" fill="#00ff00"/><rect x="165" y="179" width="1" height="1" fill="#00ff00"/><rect x="167" y="168" width="1" height="1" fill="#00ff00"/><rect x="170" y="160" width="1" height="25" fill="#00ff00"/><rect x="169" y="169" width="1" height="1" fill="#00ff00"/><rect x="171" y="182" width="1" height="1" fill="#00ff00"/><rect x="174" y="157" width="1" height="28" fill="#00ff00"/><rect x="173" y="183" width="1" height="1" fill="#00ff00"/><rect x="175" y="173" width="1" height="1" fill="#00ff00"/><rect x="178" y="140" width="1" height="24" fill="#00ff00"/><rect x="177" y="157" width="1" height="1" fill="#00ff00"/><rect x="179" y="156" width="1" height="1" fill="#00ff00"/><rect x="182" y="139" width="1" height="24" fill="#00ff00"/><rect x="181" y="155" width="1" height="1" fill="#00ff00"/><rect x="183" y="159" width="1" height="1" fill="#00ff00"/><rect x="186" y="154" width="1" height="10" fill="#00ff00"/><rect x="185" y="163" width="1" height="1" fill="#00ff00"/><rect x="187" y="163" width="1" height="1" fill="#00ff00"/><rect x="190" y="156" width="1" height="13" fill="#00ff00"/><rect x="189" y="162" width="1" height="1" fill="#00ff00"/><rect x="191" y="160" width="1" height="1" fill="#00ff00"/><rect x="194" y="155" width="1" height="16" fill="#00ff00"/><rect x="193" y="161" width="1" height="1" fill="#00ff00"/><rect x="195" y="170" width="1" height="1" fill="#00ff00"/><rect x="199" y="161" width="1" height="23" fill="#00ff00"/><rect x="198" y="177" width="1" height="1" fill="#00ff00"/><rect x="200" y="172" width="1" height="1" fill="#00ff00"/><rect x="203" y="173" width="1" height="14" fill="#00ff00"/><rect x="202" y="183" width="1" height="1" fill="#00ff00"/><rect x="204" y="182" width="1" height="1" fill="#00ff00"/><rect x="207" y="170" width="1" height="27" fill="#00ff00"/><rect x="206" y="172" width="1" height="1" fill="#00ff00"/><rect x="208" y="195" width="1" height="1" fill="#00ff00"/><rect x="211" y="162" width="1" height="16" fill="#00ff00"/><rect x="210" y="172" width="1" height="1" fill="#00ff00"/><rect x="212" y="162" width="1" height="1" fill="#00ff00"/><rect x="215" y="158" width="1" height="9" fill="#00ff00"/><rect x="214" y="161" width="1" height="1" fill="#00ff00"/><rect x="216" y="159" width="1" height="1" fill="#00ff00"/><rect x="219" y="148" width="1" height="18" fill="#00ff00"/><rect x="218" y="149" width="1" height="1" fill="#00ff00"/><rect x="220" y="149" width="1" height="1" fill="#00ff00"/><rect x="223" y="143" width="1" height="26" fill="#00ff00"/><rect x="222" y="151" width="1" height="1" fill="#00ff00"/><rect x="224" y="161" width="1" height="1" fill="#00ff00"/><rect x="227" y="144" width="1" height="53" fill="#00ff00"/><rect x="226" y="158" width="1" height="1" fill="#00ff00"/><rect x="228" y="187" width="1" height="1" fill="#00ff00"/><rect x="231" y="145" width="1" height="52" fill="#00ff00"/><rect x="230" y="151" width="1" height="1" fill="#00ff00"/><rect x="232" y="193" width="1" height="1" fill="#00ff00"/><rect x="294" y="190" width="1" height="7" fill="#00ff00"/><rect x="293" y="194" width="1" height="1" fill="#00ff00"/><rect x="295" y="191" width="1" height="1" fill="#00ff00"/><rect x="298" y="180" width="1" height="17" fill="#00ff00"/><rect x="297" y="188" width="1" height="1" fill="#00ff00"/><rect x="299" y="187" width="1" height="1" fill="#00ff00"/><rect x="342" y="184" width="1" height="13" fill="#00ff00"/><rect x="341" y="187" width="1" height="1" fill="#00ff00"/><rect x="343" y="184" width="1" height="1" fill="#00ff00"/><rect x="346" y="167" width="1" height="30" fill="#00ff00"/><rect x="345" y="180" width="1" height="1" fill="#00ff00"/><rect x="347" y="195" width="1" height="1" fill="#00ff00"/><rect x="350" y="177" width="1" height="20" fill="#00ff00"/><rect x="349" y="178" width="1" height="1" fill="#00ff00"/><rect x="351" y="178" width="1" height="1" fill="#00ff00"/><rect x="386" y="178" width="1" height="19" fill="#00ff00"/><rect x="385" y="189" width="1" height="1" fill="#00ff00"/><rect x="387" y="189" width="1" height="1" fill="#00ff00"/><rect x="390" y="156" width="1" height="31" fill="#00ff00"/><rect x="389" y="161" width="1" height="1" fill="#00ff00"/><rect x="391" y="163" width="1" height="1" fill="#00ff00"/><rect x="394" y="164" width="1" height="33" fill="#00ff00"/><rect x="393" y="165" width="1" height="1" fill="#00ff00"/><rect x="395" y="169" width="1" height="1" fill="#00ff00"/><rect x="398" y="188" width="1" height="9" fill="#00ff00"/><rect x="397" y="189" width="1" height="1" fill="#00ff00"/><rect x="399" y="189" width="1" height="1" fill="#00ff00"/><rect x="402" y="187" width="1" height="10" fill="#00ff00"/><rect x="401" y="187" width="1" height="1" fill="#00ff00"/><rect x="403" y="187" width="1" height="1" fill="#00ff00"/><rect x="422" y="111" width="1" height="86" fill="#00ff00"/><rect x="421" y="113" width="1" height="1" fill="#00ff00"/><rect x="423" y="158" width="1" height="1" fill="#00ff00"/><rect x="426" y="102" width="1" height="48" fill="#00ff00"/><rect x="425" y="118" width="1" height="1" fill="#00ff00"/><rect x="427" y="110" width="1" height="1" fill="#00ff00"/><rect x="430" y="98" width="1" height="47" fill="#00ff00"/><rect x="429" y="108" width="1" height="1" fill="#00ff00"/><rect x="431" y="109" width="1" height="1" fill="#00ff00"/><rect x="434" y="113" width="1" height="67" fill="#00ff00"/><rect x="433" y="179" width="1" height="1" fill="#00ff00"/><rect x="435" y="113" width="1" height="1" fill="#00ff00"/><rect x="438" y="162" width="1" height="35" fill="#00ff00"/><rect x="437" y="186" width="1" height="1" fill="#00ff00"/><rect x="439" y="164" width="1" height="1" fill="#00ff00"/><rect x="442" y="145" width="1" height="34" fill="#00ff00"/><rect x="441" y="160" width="1" height="1" fill="#00ff00"/><rect x="443" y="154" width="1" height="1" fill="#00ff00"/><rect x="446" y="100" width="1" height="61" fill="#00ff00"/><rect x="445" y="102" width="1" height="1" fill="#00ff00"/><rect x="447" y="100" width="1" height="1" fill="#00ff00"/><rect x="450" y="128" width="1" height="54" fill="#00ff00"/><rect x="449" y="150" width="1" height="1" fill="#00ff00"/><rect x="451" y="167" width="1" height="1" fill="#00ff00"/><rect x="454" y="159" width="1" height="38" fill="#00ff00"/><rect x="453" y="166" width="1" height="1" fill="#00ff00"/><rect x="455" y="177" width="1" height="1" fill="#00ff00"/><rect x="459" y="164" width="1" height="33" fill="#00ff00"/><rect x="458" y="185" width="1" height="1" fill="#00ff00"/><rect x="460" y="195" width="1" height="1" fill="#00ff00"/><rect x="463" y="168" width="1" height="29" fill="#00ff00"/><rect x="462" y="168" width="1" height="1" fill="#00ff00"/><rect x="464" y="177" width="1" height="1" fill="#00ff00"/><rect x="467" y="190" width="1" height="7" fill="#00ff00"/><rect x="466" y="193" width="1" height="1" fill="#00ff00"/><rect x="468" y="194" width="1" height="1" fill="#00ff00"/><path d="M2.5 193V2.5H524.5V193" stroke="#fff" fill="none"/><path d="M524 18.5H529" stroke="#fff"/><path d="M524 51.5H529" stroke="#fff"/><path d="M524 84.5H529" stroke="#fff"/><path d="M524 117.5H529" stroke="#fff"/><path d="M524 149.5H529" stroke="#fff"/><path d="M524 182.5H529" stroke="#fff"/></svg><div class="t" style="left:730px;top:536px;font-size:12.5px;color:#fff;letter-spacing:0.5px">0.91580</div><div class="t" style="left:730px;top:569px;font-size:12.5px;color:#fff;letter-spacing:0.5px">0.91500</div><div class="t" style="left:730px;top:602px;font-size:12.5px;color:#fff;letter-spacing:0.5px">0.91420</div><div class="t" style="left:730px;top:635px;font-size:12.5px;color:#fff;letter-spacing:0.5px">0.91340</div><div class="t" style="left:730px;top:667px;font-size:12.5px;color:#fff;letter-spacing:0.5px">0.91260</div><div class="t" style="left:730px;top:700px;font-size:12.5px;color:#fff;letter-spacing:0.5px">0.91180</div><svg style="left:206px;top:529px" width="20" height="16"><rect x="0.5" y="1" width="19" height="15" rx="1.5" fill="#eef2f8"/><rect x="0.5" y="0" width="19" height="3.5" rx="1" fill="#8a8af8"/><path d="M3 5.5H9.5M3 8H9.5M3 10.5H9.5M3 13H9.5" stroke="#e86060" stroke-width="1.3"/><path d="M10.5 5.5H17M10.5 8H17M10.5 10.5H17M10.5 13H17" stroke="#7a7af0" stroke-width="1.3"/></svg><div class="t" style="left:233px;top:532px;font-size:13px;color:#fff;letter-spacing:-0.6px">USDCHF, H1:&nbsp; US Dollar vs Swiss Franc</div><svg style="left:810px;top:523px;overflow:hidden" width="594" height="191" shape-rendering="crispEdges"><rect x="0" y="0" width="594" height="191" fill="#000"/><path d="M34.5 3V191M66.5 3V191M98.5 3V191M130.5 3V191M162.5 3V191M194.5 3V191M226.5 3V191M258.5 3V191M290.5 3V191M322.5 3V191M354.5 3V191M386.5 3V191M418.5 3V191M450.5 3V191M482.5 3V191M514.5 3V191M3 24.5H538M3 56.5H538M3 89.5H538M3 121.5H538M3 154.5H538M3 185.5H538" stroke="#7f8fa0" stroke-width="1" stroke-dasharray="3 3" fill="none"/><rect x="6" y="17" width="1" height="11" fill="#00ff00"/><rect x="5" y="20" width="1" height="1" fill="#00ff00"/><rect x="7" y="26" width="1" height="1" fill="#00ff00"/><rect x="10" y="21" width="1" height="11" fill="#00ff00"/><rect x="9" y="29" width="1" height="1" fill="#00ff00"/><rect x="11" y="23" width="1" height="1" fill="#00ff00"/><rect x="14" y="22" width="1" height="11" fill="#00ff00"/><rect x="13" y="27" width="1" height="1" fill="#00ff00"/><rect x="15" y="31" width="1" height="1" fill="#00ff00"/><rect x="18" y="23" width="1" height="39" fill="#00ff00"/><rect x="17" y="53" width="1" height="1" fill="#00ff00"/><rect x="19" y="60" width="1" height="1" fill="#00ff00"/><rect x="22" y="50" width="1" height="22" fill="#00ff00"/><rect x="21" y="52" width="1" height="1" fill="#00ff00"/><rect x="23" y="69" width="1" height="1" fill="#00ff00"/><rect x="26" y="54" width="1" height="14" fill="#00ff00"/><rect x="25" y="54" width="1" height="1" fill="#00ff00"/><rect x="27" y="67" width="1" height="1" fill="#00ff00"/><rect x="30" y="55" width="1" height="12" fill="#00ff00"/><rect x="29" y="62" width="1" height="1" fill="#00ff00"/><rect x="31" y="59" width="1" height="1" fill="#00ff00"/><rect x="34" y="54" width="1" height="11" fill="#00ff00"/><rect x="33" y="62" width="1" height="1" fill="#00ff00"/><rect x="35" y="57" width="1" height="1" fill="#00ff00"/><rect x="38" y="55" width="1" height="18" fill="#00ff00"/><rect x="37" y="61" width="1" height="1" fill="#00ff00"/><rect x="39" y="70" width="1" height="1" fill="#00ff00"/><rect x="42" y="34" width="1" height="34" fill="#00ff00"/><rect x="41" y="64" width="1" height="1" fill="#00ff00"/><rect x="43" y="59" width="1" height="1" fill="#00ff00"/><rect x="46" y="30" width="1" height="23" fill="#00ff00"/><rect x="45" y="50" width="1" height="1" fill="#00ff00"/><rect x="47" y="34" width="1" height="1" fill="#00ff00"/><rect x="50" y="17" width="1" height="22" fill="#00ff00"/><rect x="49" y="24" width="1" height="1" fill="#00ff00"/><rect x="51" y="37" width="1" height="1" fill="#00ff00"/><rect x="54" y="19" width="1" height="23" fill="#00ff00"/><rect x="53" y="23" width="1" height="1" fill="#00ff00"/><rect x="55" y="35" width="1" height="1" fill="#00ff00"/><rect x="58" y="30" width="1" height="12" fill="#00ff00"/><rect x="57" y="36" width="1" height="1" fill="#00ff00"/><rect x="59" y="41" width="1" height="1" fill="#00ff00"/><rect x="62" y="36" width="1" height="21" fill="#00ff00"/><rect x="61" y="36" width="1" height="1" fill="#00ff00"/><rect x="63" y="38" width="1" height="1" fill="#00ff00"/><rect x="66" y="45" width="1" height="26" fill="#00ff00"/><rect x="65" y="50" width="1" height="1" fill="#00ff00"/><rect x="67" y="69" width="1" height="1" fill="#00ff00"/><rect x="70" y="61" width="1" height="47" fill="#00ff00"/><rect x="69" y="98" width="1" height="1" fill="#00ff00"/><rect x="71" y="63" width="1" height="1" fill="#00ff00"/><rect x="74" y="85" width="1" height="17" fill="#00ff00"/><rect x="73" y="94" width="1" height="1" fill="#00ff00"/><rect x="75" y="85" width="1" height="1" fill="#00ff00"/><rect x="78" y="78" width="1" height="42" fill="#00ff00"/><rect x="77" y="95" width="1" height="1" fill="#00ff00"/><rect x="79" y="108" width="1" height="1" fill="#00ff00"/><rect x="82" y="106" width="1" height="17" fill="#00ff00"/><rect x="81" y="118" width="1" height="1" fill="#00ff00"/><rect x="83" y="119" width="1" height="1" fill="#00ff00"/><rect x="86" y="117" width="1" height="13" fill="#00ff00"/><rect x="85" y="123" width="1" height="1" fill="#00ff00"/><rect x="87" y="128" width="1" height="1" fill="#00ff00"/><rect x="90" y="111" width="1" height="13" fill="#00ff00"/><rect x="89" y="123" width="1" height="1" fill="#00ff00"/><rect x="91" y="120" width="1" height="1" fill="#00ff00"/><rect x="94" y="111" width="1" height="13" fill="#00ff00"/><rect x="93" y="118" width="1" height="1" fill="#00ff00"/><rect x="95" y="113" width="1" height="1" fill="#00ff00"/><rect x="98" y="110" width="1" height="14" fill="#00ff00"/><rect x="97" y="115" width="1" height="1" fill="#00ff00"/><rect x="99" y="111" width="1" height="1" fill="#00ff00"/><rect x="102" y="113" width="1" height="16" fill="#00ff00"/><rect x="101" y="114" width="1" height="1" fill="#00ff00"/><rect x="103" y="117" width="1" height="1" fill="#00ff00"/><rect x="106" y="99" width="1" height="33" fill="#00ff00"/><rect x="105" y="130" width="1" height="1" fill="#00ff00"/><rect x="107" y="112" width="1" height="1" fill="#00ff00"/><rect x="110" y="104" width="1" height="18" fill="#00ff00"/><rect x="109" y="112" width="1" height="1" fill="#00ff00"/><rect x="111" y="117" width="1" height="1" fill="#00ff00"/><rect x="114" y="98" width="1" height="16" fill="#00ff00"/><rect x="113" y="107" width="1" height="1" fill="#00ff00"/><rect x="115" y="111" width="1" height="1" fill="#00ff00"/><rect x="118" y="104" width="1" height="32" fill="#00ff00"/><rect x="117" y="128" width="1" height="1" fill="#00ff00"/><rect x="119" y="126" width="1" height="1" fill="#00ff00"/><rect x="122" y="130" width="1" height="12" fill="#00ff00"/><rect x="121" y="138" width="1" height="1" fill="#00ff00"/><rect x="123" y="139" width="1" height="1" fill="#00ff00"/><rect x="126" y="132" width="1" height="11" fill="#00ff00"/><rect x="125" y="138" width="1" height="1" fill="#00ff00"/><rect x="127" y="141" width="1" height="1" fill="#00ff00"/><rect x="130" y="129" width="1" height="16" fill="#00ff00"/><rect x="129" y="136" width="1" height="1" fill="#00ff00"/><rect x="131" y="139" width="1" height="1" fill="#00ff00"/><rect x="134" y="121" width="1" height="11" fill="#00ff00"/><rect x="133" y="131" width="1" height="1" fill="#00ff00"/><rect x="135" y="121" width="1" height="1" fill="#00ff00"/><rect x="138" y="122" width="1" height="12" fill="#00ff00"/><rect x="137" y="126" width="1" height="1" fill="#00ff00"/><rect x="139" y="131" width="1" height="1" fill="#00ff00"/><rect x="142" y="125" width="1" height="28" fill="#00ff00"/><rect x="141" y="146" width="1" height="1" fill="#00ff00"/><rect x="143" y="147" width="1" height="1" fill="#00ff00"/><rect x="146" y="148" width="1" height="22" fill="#00ff00"/><rect x="145" y="153" width="1" height="1" fill="#00ff00"/><rect x="147" y="158" width="1" height="1" fill="#00ff00"/><rect x="150" y="131" width="1" height="35" fill="#00ff00"/><rect x="149" y="165" width="1" height="1" fill="#00ff00"/><rect x="151" y="137" width="1" height="1" fill="#00ff00"/><rect x="154" y="103" width="1" height="36" fill="#00ff00"/><rect x="153" y="116" width="1" height="1" fill="#00ff00"/><rect x="155" y="120" width="1" height="1" fill="#00ff00"/><rect x="158" y="19" width="1" height="104" fill="#00ff00"/><rect x="157" y="55" width="1" height="1" fill="#00ff00"/><rect x="159" y="34" width="1" height="1" fill="#00ff00"/><rect x="162" y="29" width="1" height="45" fill="#00ff00"/><rect x="161" y="33" width="1" height="1" fill="#00ff00"/><rect x="163" y="59" width="1" height="1" fill="#00ff00"/><rect x="166" y="40" width="1" height="41" fill="#00ff00"/><rect x="165" y="80" width="1" height="1" fill="#00ff00"/><rect x="167" y="70" width="1" height="1" fill="#00ff00"/><rect x="170" y="70" width="1" height="65" fill="#00ff00"/><rect x="169" y="81" width="1" height="1" fill="#00ff00"/><rect x="171" y="114" width="1" height="1" fill="#00ff00"/><rect x="174" y="115" width="1" height="24" fill="#00ff00"/><rect x="173" y="117" width="1" height="1" fill="#00ff00"/><rect x="175" y="128" width="1" height="1" fill="#00ff00"/><rect x="178" y="121" width="1" height="17" fill="#00ff00"/><rect x="177" y="125" width="1" height="1" fill="#00ff00"/><rect x="179" y="121" width="1" height="1" fill="#00ff00"/><rect x="182" y="129" width="1" height="9" fill="#00ff00"/><rect x="181" y="133" width="1" height="1" fill="#00ff00"/><rect x="183" y="135" width="1" height="1" fill="#00ff00"/><rect x="186" y="129" width="1" height="14" fill="#00ff00"/><rect x="185" y="141" width="1" height="1" fill="#00ff00"/><rect x="187" y="135" width="1" height="1" fill="#00ff00"/><rect x="190" y="122" width="1" height="13" fill="#00ff00"/><rect x="189" y="123" width="1" height="1" fill="#00ff00"/><rect x="191" y="122" width="1" height="1" fill="#00ff00"/><rect x="194" y="122" width="1" height="10" fill="#00ff00"/><rect x="193" y="131" width="1" height="1" fill="#00ff00"/><rect x="195" y="131" width="1" height="1" fill="#00ff00"/><rect x="199" y="123" width="1" height="8" fill="#00ff00"/><rect x="198" y="123" width="1" height="1" fill="#00ff00"/><rect x="200" y="129" width="1" height="1" fill="#00ff00"/><rect x="203" y="121" width="1" height="9" fill="#00ff00"/><rect x="202" y="126" width="1" height="1" fill="#00ff00"/><rect x="204" y="129" width="1" height="1" fill="#00ff00"/><rect x="207" y="126" width="1" height="13" fill="#00ff00"/><rect x="206" y="130" width="1" height="1" fill="#00ff00"/><rect x="208" y="134" width="1" height="1" fill="#00ff00"/><rect x="211" y="135" width="1" height="23" fill="#00ff00"/><rect x="210" y="142" width="1" height="1" fill="#00ff00"/><rect x="212" y="136" width="1" height="1" fill="#00ff00"/><rect x="215" y="131" width="1" height="25" fill="#00ff00"/><rect x="214" y="140" width="1" height="1" fill="#00ff00"/><rect x="216" y="131" width="1" height="1" fill="#00ff00"/><rect x="219" y="132" width="1" height="14" fill="#00ff00"/><rect x="218" y="133" width="1" height="1" fill="#00ff00"/><rect x="220" y="133" width="1" height="1" fill="#00ff00"/><rect x="223" y="137" width="1" height="12" fill="#00ff00"/><rect x="222" y="146" width="1" height="1" fill="#00ff00"/><rect x="224" y="145" width="1" height="1" fill="#00ff00"/><rect x="227" y="134" width="1" height="15" fill="#00ff00"/><rect x="226" y="134" width="1" height="1" fill="#00ff00"/><rect x="228" y="137" width="1" height="1" fill="#00ff00"/><rect x="231" y="137" width="1" height="11" fill="#00ff00"/><rect x="230" y="143" width="1" height="1" fill="#00ff00"/><rect x="232" y="141" width="1" height="1" fill="#00ff00"/><rect x="235" y="129" width="1" height="13" fill="#00ff00"/><rect x="234" y="138" width="1" height="1" fill="#00ff00"/><rect x="236" y="133" width="1" height="1" fill="#00ff00"/><rect x="239" y="128" width="1" height="21" fill="#00ff00"/><rect x="238" y="132" width="1" height="1" fill="#00ff00"/><rect x="240" y="129" width="1" height="1" fill="#00ff00"/><rect x="243" y="143" width="1" height="54" fill="#00ff00"/><rect x="242" y="164" width="1" height="1" fill="#00ff00"/><rect x="244" y="163" width="1" height="1" fill="#00ff00"/><rect x="247" y="169" width="1" height="28" fill="#00ff00"/><rect x="246" y="180" width="1" height="1" fill="#00ff00"/><rect x="248" y="173" width="1" height="1" fill="#00ff00"/><rect x="251" y="165" width="1" height="32" fill="#00ff00"/><rect x="250" y="189" width="1" height="1" fill="#00ff00"/><rect x="252" y="189" width="1" height="1" fill="#00ff00"/><rect x="255" y="180" width="1" height="17" fill="#00ff00"/><rect x="254" y="194" width="1" height="1" fill="#00ff00"/><rect x="256" y="196" width="1" height="1" fill="#00ff00"/><rect x="259" y="184" width="1" height="13" fill="#00ff00"/><rect x="258" y="190" width="1" height="1" fill="#00ff00"/><rect x="260" y="194" width="1" height="1" fill="#00ff00"/><path d="M2.5 193V2.5H538.5V193" stroke="#fff" fill="none"/><path d="M538 24.5H543" stroke="#fff"/><path d="M538 56.5H543" stroke="#fff"/><path d="M538 89.5H543" stroke="#fff"/><path d="M538 121.5H543" stroke="#fff"/><path d="M538 154.5H543" stroke="#fff"/><path d="M538 185.5H543" stroke="#fff"/></svg><div class="t" style="left:1354px;top:542px;font-size:12.5px;color:#fff;letter-spacing:0.5px">105.095</div><div class="t" style="left:1354px;top:574px;font-size:12.5px;color:#fff;letter-spacing:0.5px">104.930</div><div class="t" style="left:1354px;top:607px;font-size:12.5px;color:#fff;letter-spacing:0.5px">104.765</div><div class="t" style="left:1354px;top:639px;font-size:12.5px;color:#fff;letter-spacing:0.5px">104.600</div><div class="t" style="left:1354px;top:672px;font-size:12.5px;color:#fff;letter-spacing:0.5px">104.435</div><div class="t" style="left:1354px;top:703px;font-size:12.5px;color:#fff;letter-spacing:0.5px">104.270</div><svg style="left:816px;top:529px" width="20" height="16"><rect x="0.5" y="1" width="19" height="15" rx="1.5" fill="#eef2f8"/><rect x="0.5" y="0" width="19" height="3.5" rx="1" fill="#8a8af8"/><path d="M3 5.5H9.5M3 8H9.5M3 10.5H9.5M3 13H9.5" stroke="#e86060" stroke-width="1.3"/><path d="M10.5 5.5H17M10.5 8H17M10.5 10.5H17M10.5 13H17" stroke="#7a7af0" stroke-width="1.3"/></svg><div class="t" style="left:843px;top:532px;font-size:13px;color:#fff;letter-spacing:-0.6px">USDJPY, H1:&nbsp; US Dollar vs Japanese Yen</div><div class="a" style="left:193px;top:714px;width:1218px;height:27px;background:#f0f0f0"></div><div class="a" style="left:193px;top:714px;width:1218px;height:2px;background:#fff"></div><div class="a" style="left:193px;top:716px;width:1218px;height:1px;background:#000"></div><div class="a" style="left:194px;top:716px;width:104px;height:24px;background:#fff;border:2px solid #000;border-top:none"></div><div class="t" style="left:207px;top:721px;font-size:14.5px"><span style="letter-spacing:-0.55px">EURUSD,H1</span></div><div class="t" style="left:313px;top:721px;font-size:14.5px;color:#6d6d6d"><span style="letter-spacing:-0.55px">USDCHF,H1</span></div><div class="a" style="left:403px;top:720px;width:1px;height:18px;background:#808080"></div><div class="t" style="left:417px;top:721px;font-size:14.5px;color:#6d6d6d"><span style="letter-spacing:-0.55px">GBPUSD,H1</span></div><div class="a" style="left:509px;top:720px;width:1px;height:18px;background:#808080"></div><div class="t" style="left:524px;top:721px;font-size:14.5px;color:#6d6d6d"><span style="letter-spacing:-0.55px">USDJPY,H1</span></div><div class="a" style="left:0px;top:740px;width:1413px;height:1px;background:#a0a0a0"></div><div class="a" style="left:0px;top:741px;width:1413px;height:1px;background:#fff"></div><div class="a" style="left:14px;top:746px;width:1399px;height:27px;background:#fff;border:1px solid #a8a8a8;border-right:none;border-bottom-color:#e8e8e8"></div><svg style="left:-1px;top:749px" width="10" height="9"><path d="M1 1L8.5 8M8.5 1L1 8" stroke="#000" stroke-width="2"/></svg><svg style="left:0px;top:761px" width="6" height="8"><path d="M1 1H5M1 3.5H5M1 6H5" stroke="#909090" stroke-width="1"/></svg><svg style="left:24px;top:754px" width="12" height="12"><defs><radialGradient id="gd" cx="40%" cy="35%" r="60%"><stop offset="0" stop-color="#f4f4f4"/><stop offset="1" stop-color="#8a8a8a"/></radialGradient></defs><circle cx="6" cy="6" r="5" fill="url(#gd)"/></svg><div class="t" style="left:45px;top:753px;font-size:14.5px">本日餘額<span style="letter-spacing:-0.55px">: 0.00 USD</span></div><div class="t" style="left:179px;top:753px;font-size:14.5px">盈利<span style="letter-spacing:-0.55px">: 0.00</span></div><div class="t" style="left:251px;top:753px;font-size:14.5px">權益數<span style="letter-spacing:-0.55px">: 0.00</span></div><div class="t" style="left:339px;top:753px;font-size:14.5px">可用保證金<span style="letter-spacing:-0.55px">: 0.00</span></div><div class="a" style="left:0px;top:778px;width:1413px;height:1px;background:#a0a0a0"></div><svg style="left:-1px;top:787px" width="10" height="9"><path d="M1 1L8.5 8M8.5 1L1 8" stroke="#000" stroke-width="2"/></svg><div class="a" style="left:14px;top:784px;width:1399px;height:1px;background:#a0a0a0"></div><div class="a" style="left:14px;top:784px;width:1px;height:160px;background:#a0a0a0"></div><div class="a" style="left:15px;top:785px;width:1398px;height:159px;background:#fff"></div><div class="a" style="left:0px;top:802px;width:13px;height:170px;background:linear-gradient(#d9e4f0,#c2d3e6)"></div><div class="a" style="left:0;top:802px;width:13px;height:170px;overflow:hidden"><div class="t" style="left:-27px;top:136px;width:66px;height:14px;transform:rotate(-90deg);font-size:14px;text-align:right">策略測試</div></div><div class="a" style="left:13px;top:802px;width:1px;height:170px;background:#a0a0a0"></div><div class="a" style="left:35px;top:807px;width:125px;height:125px;border:1px solid #ececec"></div><div class="a" style="left:180px;top:807px;width:125px;height:125px;border:1px solid #ececec"></div><div class="a" style="left:325px;top:807px;width:125px;height:125px;border:1px solid #ececec"></div><div class="a" style="left:470px;top:807px;width:125px;height:125px;border:1px solid #ececec"></div><div class="a" style="left:635px;top:807px;width:125px;height:125px;border:1px solid #ececec"></div><div class="a" style="left:780px;top:807px;width:125px;height:125px;border:1px solid #ececec"></div><div class="a" style="left:925px;top:807px;width:125px;height:125px;border:1px solid #ececec"></div><div class="a" style="left:1090px;top:807px;width:125px;height:125px;border:1px solid #ececec"></div><div class="a" style="left:1235px;top:807px;width:125px;height:125px;border:1px solid #ececec"></div><div class="a" style="left:1400px;top:807px;width:125px;height:125px;border:1px solid #ececec"></div><svg style="left:35px;top:807px" width="125" height="125"><rect x="18.5" y="18.5" width="50" height="45" fill="#fff" stroke="#c8c8c8"/><path d="M19 22.5H68" stroke="#d8d8d8"/><rect x="23.2" y="49.6" width="1.3" height="9.1" fill="#4a80e8"/><rect x="26.0" y="47.0" width="1.3" height="11.7" fill="#f08070"/><rect x="30.6" y="39.0" width="1.3" height="19.7" fill="#4a80e8"/><rect x="33.4" y="34.3" width="1.3" height="24.4" fill="#f08070"/><rect x="38.5" y="27.7" width="1.3" height="31.0" fill="#2060e0"/><rect x="41.1" y="25.8" width="1.3" height="32.9" fill="#f06050"/><rect x="46.1" y="31.5" width="1.3" height="27.2" fill="#4a80e8"/><rect x="48.5" y="29.0" width="1.3" height="29.7" fill="#f06050"/><rect x="53.6" y="45.3" width="1.3" height="13.4" fill="#2060e0"/><rect x="56.3" y="40.7" width="1.3" height="18.0" fill="#f08070"/><rect x="61.0" y="50.6" width="1.3" height="8.1" fill="#4a80e8"/><rect x="63.6" y="47.9" width="1.3" height="10.8" fill="#f06050"/><path d="M18.3 92.5C20.2 93.2 25.9 97.5 29.6 96.7C33.2 95.9 37.0 89.5 40.2 87.8C43.4 86.1 45.9 89.2 48.7 86.7C51.5 84.2 54.4 75.9 57.2 72.9C60.0 69.9 63.6 72.2 65.7 68.7C67.8 65.1 67.8 55.2 69.9 51.7C72.0 48.2 75.9 49.9 78.4 47.4C80.9 45.0 82.3 39.1 84.8 36.8C87.3 34.5 90.8 34.9 93.3 33.6C95.8 32.4 97.2 30.7 99.6 29.4C102.1 28.1 106.4 26.4 107.7 25.8" fill="none" stroke="#1050e0" stroke-width="2.6"/><path d="M18.3 85.7C19.9 86.3 24.5 90.0 27.5 89.5C30.4 89.0 32.8 83.6 36.0 82.5C39.1 81.3 43.7 84.2 46.6 82.5C49.4 80.7 50.5 74.2 52.9 71.9C55.4 69.6 59.3 71.0 61.4 68.7C63.6 66.4 63.6 60.9 65.7 58.1C67.8 55.2 72.4 54.3 74.2 51.7C75.9 49.0 74.5 44.3 76.3 42.1C78.1 40.0 82.3 41.3 84.8 39.0C87.3 36.7 88.7 30.5 91.2 28.3C93.6 26.2 96.9 27.7 99.6 26.2C102.4 24.7 106.4 20.6 107.7 19.4" fill="none" stroke="#13a813" stroke-width="2.6"/><rect x="49.5" y="82.5" width="58" height="25" fill="#fff" stroke="#c8c8c8"/><path d="M50 86.5H107" stroke="#e0e0e0"/><rect x="54.0" y="94.2" width="1.3" height="8.5" fill="#8fd88f"/><rect x="56.6" y="92.0" width="1.3" height="10.6" fill="#1a9a1a"/><rect x="59.1" y="95.2" width="1.3" height="7.4" fill="#8fd88f"/><rect x="61.7" y="92.5" width="1.3" height="10.2" fill="#1a9a1a"/><rect x="64.3" y="93.7" width="1.3" height="8.9" fill="#8fd88f"/><rect x="66.8" y="92.0" width="1.3" height="10.6" fill="#1a9a1a"/><rect x="69.4" y="94.2" width="1.3" height="8.5" fill="#8fd88f"/><rect x="72.0" y="92.0" width="1.3" height="10.6" fill="#1a9a1a"/><rect x="74.6" y="95.2" width="1.3" height="7.4" fill="#8fd88f"/><rect x="77.1" y="92.5" width="1.3" height="10.2" fill="#1a9a1a"/><rect x="79.7" y="93.7" width="1.3" height="8.9" fill="#8fd88f"/><rect x="82.3" y="92.0" width="1.3" height="10.6" fill="#1a9a1a"/><rect x="84.8" y="94.2" width="1.3" height="8.5" fill="#8fd88f"/><rect x="87.4" y="92.0" width="1.3" height="10.6" fill="#1a9a1a"/><rect x="90.0" y="95.2" width="1.3" height="7.4" fill="#8fd88f"/><rect x="92.5" y="92.5" width="1.3" height="10.2" fill="#1a9a1a"/><rect x="95.1" y="93.7" width="1.3" height="8.9" fill="#8fd88f"/><rect x="97.7" y="92.0" width="1.3" height="10.6" fill="#1a9a1a"/><rect x="100.2" y="94.2" width="1.3" height="8.5" fill="#8fd88f"/><rect x="102.8" y="92.0" width="1.3" height="10.6" fill="#1a9a1a"/></svg><svg style="left:180px;top:807px" width="125" height="125"><path d="M23.7 51.7V83.5" stroke="#3a3f48" stroke-width="1.2"/><rect x="21.2" y="61.2" width="5" height="13.8" fill="#fff" stroke="#555a62" stroke-width="1.1"/><path d="M34.9 62.3V86.7" stroke="#3a3f48" stroke-width="1.2"/><rect x="32.1" y="69.7" width="5.6" height="10.0" fill="#3a3f48"/><path d="M45.5 60.8V92.5" stroke="#3a3f48" stroke-width="1.2"/><rect x="42.7" y="67.2" width="5.6" height="17.8" fill="#3a3f48"/><path d="M57.2 57.0V88.8" stroke="#3a3f48" stroke-width="1.2"/><rect x="54.7" y="62.3" width="5" height="14.9" fill="#fff" stroke="#555a62" stroke-width="1.1"/><path d="M68.7 39.0V70.4" stroke="#3a3f48" stroke-width="1.2"/><rect x="66.2" y="45.7" width="5" height="17.6" fill="#fff" stroke="#555a62" stroke-width="1.1"/><path d="M79.9 41.1V66.1" stroke="#3a3f48" stroke-width="1.2"/><rect x="77.1" y="48.1" width="5.6" height="10.4" fill="#3a3f48"/><path d="M91.2 26.9V58.5" stroke="#3a3f48" stroke-width="1.2"/><rect x="88.7" y="31.1" width="5" height="22.1" fill="#fff" stroke="#555a62" stroke-width="1.1"/><path d="M102.6 22.0V57.6" stroke="#3a3f48" stroke-width="1.2"/><rect x="100.1" y="27.3" width="5" height="22.3" fill="#fff" stroke="#555a62" stroke-width="1.1"/><path d="M34.692144373673045 90.9723991507431L41.942144373673045 99.2223991507431H38.75214437367305V107.4723991507431H30.632144373673043V99.2223991507431H27.442144373673045Z" fill="#0a50d8"/><path d="M91.16772823779192 63.37154989384288L98.41772823779192 71.62154989384288H95.22772823779192V79.87154989384288H87.10772823779192V71.62154989384288H83.91772823779192Z" fill="#0a50d8"/><path d="M57.40976645435245 44.91507430997877L64.65976645435245 36.41507430997877H61.46976645435245V27.91507430997877H53.34976645435245V36.41507430997877H50.15976645435245Z" fill="#f05a46"/></svg><svg style="left:325px;top:807px" width="125" height="125"><path d="M23.7 50.5V82.2" stroke="#3a3f48" stroke-width="1.2"/><rect x="21.2" y="59.4" width="5" height="13.9" fill="#fff" stroke="#60656d" stroke-width="1.1"/><path d="M35.0 61.4V85.2" stroke="#3a3f48" stroke-width="1.2"/><rect x="32.5" y="69.3" width="5" height="10.9" fill="#fff" stroke="#60656d" stroke-width="1.1"/><path d="M46.1 59.4V91.1" stroke="#3a3f48" stroke-width="1.2"/><rect x="43.3" y="78.2" width="5.6" height="5.9" fill="#3a3f48"/><path d="M57.4 56.4V87.1" stroke="#3a3f48" stroke-width="1.2"/><rect x="54.9" y="70.3" width="5" height="5.9" fill="#fff" stroke="#60656d" stroke-width="1.1"/><path d="M68.7 38.6V68.3" stroke="#3a3f48" stroke-width="1.2"/><rect x="66.2" y="44.5" width="5" height="17.8" fill="#fff" stroke="#60656d" stroke-width="1.1"/><path d="M80.2 38.6V64.3" stroke="#3a3f48" stroke-width="1.2"/><rect x="77.4" y="48.5" width="5.6" height="8.9" fill="#3a3f48"/><path d="M91.5 25.7V57.4" stroke="#3a3f48" stroke-width="1.2"/><rect x="89.0" y="29.7" width="5" height="22.8" fill="#fff" stroke="#60656d" stroke-width="1.1"/><path d="M102.6 20.7V56.4" stroke="#3a3f48" stroke-width="1.2"/><rect x="100.1" y="25.7" width="5" height="23.8" fill="#fff" stroke="#60656d" stroke-width="1.1"/><path d="M18.4 74.3C19.8 75.0 23.8 78.9 26.7 78.6C29.6 78.3 32.8 72.9 35.6 72.3C38.4 71.6 41.1 75.5 43.6 74.6C46.0 73.8 48.0 68.7 50.5 67.3C53.0 65.9 55.8 68.1 58.4 66.3C61.1 64.5 63.9 58.2 66.3 56.4C68.8 54.6 71.5 57.4 73.3 55.4C75.1 53.4 75.4 46.7 77.2 44.5C79.1 42.4 81.9 44.4 84.2 42.5C86.5 40.7 88.8 34.8 91.1 33.6C93.4 32.5 95.3 36.1 98.1 35.6C100.8 35.1 106.0 31.5 107.6 30.7" fill="none" stroke="#13a813" stroke-width="2.6"/><rect x="19.3" y="97.1" width="1.3" height="10.5" fill="#1a1a1a"/><rect x="23.1" y="98.3" width="1.3" height="9.3" fill="#1a1a1a"/><rect x="26.9" y="99.8" width="1.3" height="7.8" fill="#1a1a1a"/><rect x="30.7" y="102.2" width="1.3" height="5.4" fill="#999"/><rect x="34.5" y="106.1" width="1.3" height="1.5" fill="#999"/><rect x="38.3" y="102.2" width="1.3" height="5.4" fill="#1a1a1a"/><rect x="42.1" y="99.8" width="1.3" height="7.8" fill="#1a1a1a"/><rect x="45.9" y="99.8" width="1.3" height="7.8" fill="#1a1a1a"/><rect x="49.7" y="97.9" width="1.3" height="9.7" fill="#999"/><rect x="53.4" y="97.1" width="1.3" height="10.5" fill="#999"/><rect x="57.2" y="99.5" width="1.3" height="8.1" fill="#1a1a1a"/><rect x="61.0" y="101.8" width="1.3" height="5.8" fill="#1a1a1a"/><rect x="64.8" y="97.1" width="1.3" height="10.5" fill="#999"/><rect x="68.6" y="96.3" width="1.3" height="11.3" fill="#999"/><rect x="72.4" y="90.5" width="1.3" height="17.1" fill="#1a1a1a"/><rect x="76.2" y="86.2" width="1.3" height="21.4" fill="#1a1a1a"/><rect x="80.0" y="86.2" width="1.3" height="21.4" fill="#999"/><rect x="83.8" y="89.7" width="1.3" height="17.9" fill="#1a1a1a"/><rect x="87.6" y="90.9" width="1.3" height="16.7" fill="#1a1a1a"/><rect x="91.3" y="93.2" width="1.3" height="14.4" fill="#999"/><rect x="95.1" y="90.9" width="1.3" height="16.7" fill="#1a1a1a"/><rect x="98.9" y="84.7" width="1.3" height="22.9" fill="#1a1a1a"/><rect x="102.7" y="83.9" width="1.3" height="23.7" fill="#1a1a1a"/><rect x="106.5" y="81.2" width="1.3" height="26.4" fill="#1a1a1a"/><path d="M18.2 100.2C19.1 100.5 21.9 101.1 23.6 101.8C25.4 102.4 27.1 103.6 28.7 104.1C30.3 104.6 31.8 105.0 33.3 104.9C34.9 104.8 36.5 104.1 38.0 103.4C39.6 102.6 41.3 101.1 42.7 100.2C44.1 99.4 45.3 98.7 46.6 98.3C47.9 97.8 48.8 97.5 50.5 97.5C52.2 97.5 54.9 98.1 56.7 98.3C58.5 98.5 59.9 98.8 61.4 98.7C62.8 98.6 64.0 98.2 65.3 97.5C66.5 96.9 68.0 96.0 69.1 94.8C70.3 93.6 71.1 91.7 72.3 90.5C73.4 89.3 74.5 88.3 76.1 87.8C77.8 87.3 80.2 87.3 82.0 87.4C83.8 87.5 85.4 88.0 87.0 88.2C88.7 88.4 90.3 88.8 91.7 88.6C93.1 88.4 94.2 87.8 95.6 87.0C97.0 86.2 98.5 84.8 100.3 83.9C102.1 83.0 105.5 81.9 106.5 81.6" fill="none" stroke="#13a813" stroke-width="1.1" stroke-dasharray="3 2.5"/></svg><svg style="left:470px;top:807px" width="125" height="125"><polyline points="18.1,96.6 18.9,97.1 20.1,97.8 21.6,98.6 23.1,99.4 24.8,100.2 26.4,100.7 28.0,101.1 29.3,101.0 30.6,100.6 31.7,99.8 32.8,98.8 33.9,97.6 35.0,96.3 36.0,95.1 37.1,94.0 38.3,93.2 39.5,92.6 40.8,92.2 42.1,92.0 43.4,91.8 44.7,91.5 46.0,91.2 47.1,90.7 48.2,89.9 49.1,88.8 49.9,87.4 50.6,85.8 51.3,84.2 51.9,82.5 52.6,80.9 53.3,79.4 54.1,78.1 55.0,77.1 56.0,76.3 57.1,75.7 58.1,75.1 59.2,74.5 60.2,73.8 61.2,72.9 62.0,71.8 62.8,70.4 63.4,68.7 64.0,66.8 64.5,64.9 65.1,63.0 65.6,61.2 66.3,59.6 67.0,58.2 67.9,57.2 68.8,56.5 69.9,56.0 71.0,55.6 72.0,55.2 73.1,54.7 74.1,54.1 74.9,53.2 75.7,52.0 76.3,50.6 76.9,49.0 77.4,47.4 77.9,45.7 78.5,44.2 79.1,42.9 79.9,41.8 80.7,41.1 81.7,40.6 82.7,40.3 83.7,40.1 84.8,40.0 85.8,39.8 86.8,39.6 87.8,39.2 88.7,38.7 89.6,38.2 90.5,37.5 91.3,36.9 92.2,36.3 93.0,35.7 93.9,35.1 94.7,34.7 95.6,34.4 96.5,34.1 97.4,34.0 98.3,33.8 99.2,33.7 100.0,33.6 100.9,33.4 101.7,33.1 102.5,32.8 103.4,32.3 104.2,31.9 105.1,31.4 105.9,30.9 106.6,30.4 107.2,30.1 107.6,29.8" fill="none" stroke="#1050e0" stroke-width="2.6" stroke-linejoin="round"/><polyline points="18.1,90.3 18.9,90.6 20.1,91.1 21.6,91.7 23.1,92.4 24.8,93.1 26.4,93.6 28.0,93.9 29.3,93.8 30.6,93.4 31.7,92.7 32.8,91.8 33.9,90.7 35.0,89.6 36.0,88.5 37.1,87.6 38.3,87.0 39.5,86.7 40.8,86.6 42.1,86.7 43.4,86.8 44.7,86.9 46.0,86.9 47.1,86.8 48.2,86.4 49.1,85.7 49.9,84.8 50.6,83.7 51.3,82.5 51.9,81.3 52.6,80.1 53.3,79.1 54.1,78.3 55.0,77.8 56.0,77.4 57.1,77.2 58.1,77.1 59.2,76.9 60.2,76.7 61.2,76.2 62.0,75.5 62.8,74.5 63.4,73.2 64.0,71.7 64.5,70.1 65.1,68.5 65.6,67.0 66.3,65.6 67.0,64.5 67.9,63.7 68.8,63.2 69.9,62.9 71.0,62.6 72.0,62.3 73.1,61.9 74.1,61.3 74.9,60.4 75.7,59.2 76.3,57.7 76.9,56.1 77.4,54.3 77.9,52.5 78.5,50.8 79.1,49.3 79.9,48.0 80.7,47.0 81.7,46.2 82.7,45.6 83.7,45.1 84.8,44.6 85.8,44.1 86.8,43.5 87.8,42.7 88.7,41.8 89.6,40.8 90.5,39.7 91.3,38.6 92.2,37.5 93.0,36.4 93.9,35.4 94.7,34.5 95.6,33.8 96.5,33.0 97.4,32.4 98.3,31.8 99.2,31.2 100.0,30.7 100.9,30.0 101.7,29.4 102.5,28.6 103.4,27.8 104.2,27.0 105.1,26.2 105.9,25.4 106.6,24.6 107.2,24.0 107.6,23.5" fill="none" stroke="#13a813" stroke-width="2.6" stroke-linejoin="round"/><circle cx="30.5" cy="54" r="9.5" fill="#fff" stroke="#5f6570" stroke-width="2.3"/><rect x="29.5" y="40" width="2" height="4" fill="#5f6570"/><rect x="27.5" y="39" width="6" height="2" fill="#5f6570"/><path d="M37.5 46L41.5 42" stroke="#5f6570" stroke-width="2.2"/><path d="M29.5 55L34.5 50" stroke="#f05a46" stroke-width="1.5"/><path d="M27 70V84M33 70V84" stroke="#1050e0" stroke-width="1" stroke-dasharray="2 1.5"/><path d="M24 78L30.5 86L37 78" fill="none" stroke="#1050e0" stroke-width="1"/><circle cx="83.5" cy="91" r="9.5" fill="#fff" stroke="#e0553a" stroke-width="2.3"/><rect x="82.5" y="77" width="2" height="4" fill="#e0553a"/><rect x="80.5" y="76" width="6" height="2" fill="#e0553a"/><path d="M90.5 83L94.5 79" stroke="#e0553a" stroke-width="2.2"/><path d="M82.5 92L87.5 87" stroke="#f05a46" stroke-width="1.5"/><path d="M80.5 62V74M86.5 62V74" stroke="#f05a46" stroke-width="1" stroke-dasharray="2 1.5"/><path d="M77 66L83.5 58L90 66" fill="none" stroke="#f05a46" stroke-width="1"/></svg><svg style="left:635px;top:807px" width="125" height="125"><circle cx="24.7" cy="33.6" r="1.6" fill="#0a4ed8"/><circle cx="46.1" cy="26.1" r="1.6" fill="#0a4ed8"/><circle cx="78.6" cy="29.7" r="1.6" fill="#0a4ed8"/><circle cx="102.4" cy="27.3" r="1.6" fill="#0a4ed8"/><circle cx="36.0" cy="38.6" r="1.6" fill="#0a4ed8"/><circle cx="48.5" cy="37.2" r="1.6" fill="#0a4ed8"/><circle cx="59.8" cy="36.0" r="1.6" fill="#0a4ed8"/><circle cx="87.4" cy="37.2" r="1.6" fill="#0a4ed8"/><circle cx="26.1" cy="46.1" r="1.6" fill="#0a4ed8"/><circle cx="74.9" cy="42.1" r="1.6" fill="#0a4ed8"/><circle cx="34.6" cy="51.1" r="1.6" fill="#0a4ed8"/><circle cx="42.2" cy="48.5" r="1.6" fill="#0a4ed8"/><circle cx="52.5" cy="49.9" r="1.6" fill="#0a4ed8"/><circle cx="58.4" cy="49.9" r="1.6" fill="#0a4ed8"/><circle cx="66.3" cy="52.5" r="1.6" fill="#0a4ed8"/><circle cx="69.9" cy="48.5" r="1.6" fill="#0a4ed8"/><circle cx="77.4" cy="49.9" r="1.6" fill="#0a4ed8"/><circle cx="88.5" cy="48.5" r="1.6" fill="#0a4ed8"/><circle cx="95.1" cy="52.5" r="1.6" fill="#0a4ed8"/><circle cx="24.7" cy="57.4" r="1.6" fill="#0a4ed8"/><circle cx="36.0" cy="57.4" r="1.6" fill="#0a4ed8"/><circle cx="41.0" cy="58.4" r="1.6" fill="#0a4ed8"/><circle cx="47.5" cy="56.0" r="1.6" fill="#0a4ed8"/><circle cx="53.5" cy="58.4" r="1.6" fill="#0a4ed8"/><circle cx="61.4" cy="56.0" r="1.6" fill="#0a4ed8"/><circle cx="67.3" cy="58.4" r="1.6" fill="#0a4ed8"/><circle cx="72.3" cy="54.8" r="1.6" fill="#0a4ed8"/><circle cx="78.6" cy="57.4" r="1.6" fill="#0a4ed8"/><circle cx="83.6" cy="53.4" r="1.6" fill="#0a4ed8"/><circle cx="87.4" cy="57.4" r="1.6" fill="#0a4ed8"/><circle cx="102.4" cy="56.0" r="1.6" fill="#0a4ed8"/><circle cx="24.7" cy="67.3" r="1.6" fill="#0a4ed8"/><circle cx="31.1" cy="67.3" r="1.6" fill="#0a4ed8"/><circle cx="41.0" cy="66.3" r="1.6" fill="#0a4ed8"/><circle cx="46.1" cy="66.3" r="1.6" fill="#0a4ed8"/><circle cx="61.4" cy="67.3" r="1.6" fill="#0a4ed8"/><circle cx="71.1" cy="66.3" r="1.6" fill="#0a4ed8"/><circle cx="76.3" cy="68.3" r="1.6" fill="#0a4ed8"/><circle cx="82.4" cy="66.3" r="1.6" fill="#0a4ed8"/><circle cx="91.1" cy="66.3" r="1.6" fill="#0a4ed8"/><circle cx="34.6" cy="71.3" r="1.6" fill="#0a4ed8"/><circle cx="43.6" cy="72.3" r="1.6" fill="#0a4ed8"/><circle cx="52.5" cy="69.9" r="1.6" fill="#0a4ed8"/><circle cx="69.9" cy="73.3" r="1.6" fill="#0a4ed8"/><circle cx="78.6" cy="74.6" r="1.6" fill="#0a4ed8"/><circle cx="84.8" cy="71.3" r="1.6" fill="#0a4ed8"/><circle cx="90.1" cy="73.3" r="1.6" fill="#0a4ed8"/><circle cx="105.0" cy="71.3" r="1.6" fill="#0a4ed8"/><circle cx="22.3" cy="76.2" r="1.6" fill="#0a4ed8"/><circle cx="34.6" cy="77.2" r="1.6" fill="#0a4ed8"/><circle cx="48.5" cy="76.2" r="1.6" fill="#0a4ed8"/><circle cx="56.2" cy="77.2" r="1.6" fill="#0a4ed8"/><circle cx="97.3" cy="77.2" r="1.6" fill="#0a4ed8"/><circle cx="64.8" cy="82.2" r="1.6" fill="#0a4ed8"/><circle cx="86.2" cy="81.2" r="1.6" fill="#0a4ed8"/><circle cx="29.7" cy="86.1" r="1.6" fill="#0a4ed8"/><circle cx="44.7" cy="84.8" r="1.6" fill="#0a4ed8"/><circle cx="82.4" cy="87.3" r="1.6" fill="#0a4ed8"/><circle cx="95.1" cy="86.1" r="1.6" fill="#0a4ed8"/><circle cx="58.4" cy="92.1" r="1.6" fill="#0a4ed8"/><circle cx="88.5" cy="100.0" r="1.6" fill="#0a4ed8"/><path d="M18 62.5H108" stroke="#333" stroke-width="1.2"/></svg><svg style="left:780px;top:807px" width="125" height="125"><rect x="18" y="18" width="90" height="90" fill="#f2f2f2"/><rect x="18" y="18" width="5" height="5" fill="#dcdcdc"/><rect x="28" y="18" width="5" height="5" fill="#dcdcdc"/><rect x="38" y="18" width="5" height="5" fill="#dcdcdc"/><rect x="48" y="18" width="5" height="5" fill="#dcdcdc"/><rect x="58" y="18" width="5" height="5" fill="#dcdcdc"/><rect x="68" y="18" width="5" height="5" fill="#dcdcdc"/><rect x="78" y="18" width="5" height="5" fill="#dcdcdc"/><rect x="88" y="18" width="5" height="5" fill="#dcdcdc"/><rect x="98" y="18" width="5" height="5" fill="#dcdcdc"/><rect x="23" y="23" width="5" height="5" fill="#dcdcdc"/><rect x="33" y="23" width="5" height="5" fill="#dcdcdc"/><rect x="43" y="23" width="5" height="5" fill="#dcdcdc"/><rect x="53" y="23" width="5" height="5" fill="#dcdcdc"/><rect x="63" y="23" width="5" height="5" fill="#dcdcdc"/><rect x="73" y="23" width="5" height="5" fill="#dcdcdc"/><rect x="83" y="23" width="5" height="5" fill="#dcdcdc"/><rect x="93" y="23" width="5" height="5" fill="#dcdcdc"/><rect x="103" y="23" width="5" height="5" fill="#dcdcdc"/><rect x="18" y="28" width="5" height="5" fill="#dcdcdc"/><rect x="28" y="28" width="5" height="5" fill="#dcdcdc"/><rect x="38" y="28" width="5" height="5" fill="#dcdcdc"/><rect x="48" y="28" width="5" height="5" fill="#dcdcdc"/><rect x="58" y="28" width="5" height="5" fill="#dcdcdc"/><rect x="68" y="28" width="5" height="5" fill="#dcdcdc"/><rect x="78" y="28" width="5" height="5" fill="#dcdcdc"/><rect x="88" y="28" width="5" height="5" fill="#dcdcdc"/><rect x="98" y="28" width="5" height="5" fill="#dcdcdc"/><rect x="23" y="33" width="5" height="5" fill="#dcdcdc"/><rect x="33" y="33" width="5" height="5" fill="#dcdcdc"/><rect x="43" y="33" width="5" height="5" fill="#dcdcdc"/><rect x="53" y="33" width="5" height="5" fill="#dcdcdc"/><rect x="63" y="33" width="5" height="5" fill="#dcdcdc"/><rect x="73" y="33" width="5" height="5" fill="#dcdcdc"/><rect x="83" y="33" width="5" height="5" fill="#dcdcdc"/><rect x="93" y="33" width="5" height="5" fill="#dcdcdc"/><rect x="103" y="33" width="5" height="5" fill="#dcdcdc"/><rect x="18" y="38" width="5" height="5" fill="#dcdcdc"/><rect x="28" y="38" width="5" height="5" fill="#dcdcdc"/><rect x="38" y="38" width="5" height="5" fill="#dcdcdc"/><rect x="48" y="38" width="5" height="5" fill="#dcdcdc"/><rect x="58" y="38" width="5" height="5" fill="#dcdcdc"/><rect x="68" y="38" width="5" height="5" fill="#dcdcdc"/><rect x="78" y="38" width="5" height="5" fill="#dcdcdc"/><rect x="88" y="38" width="5" height="5" fill="#dcdcdc"/><rect x="98" y="38" width="5" height="5" fill="#dcdcdc"/><rect x="23" y="43" width="5" height="5" fill="#dcdcdc"/><rect x="33" y="43" width="5" height="5" fill="#dcdcdc"/><rect x="43" y="43" width="5" height="5" fill="#dcdcdc"/><rect x="53" y="43" width="5" height="5" fill="#dcdcdc"/><rect x="63" y="43" width="5" height="5" fill="#dcdcdc"/><rect x="73" y="43" width="5" height="5" fill="#dcdcdc"/><rect x="83" y="43" width="5" height="5" fill="#dcdcdc"/><rect x="93" y="43" width="5" height="5" fill="#dcdcdc"/><rect x="103" y="43" width="5" height="5" fill="#dcdcdc"/><rect x="18" y="48" width="5" height="5" fill="#dcdcdc"/><rect x="28" y="48" width="5" height="5" fill="#dcdcdc"/><rect x="38" y="48" width="5" height="5" fill="#dcdcdc"/><rect x="48" y="48" width="5" height="5" fill="#dcdcdc"/><rect x="58" y="48" width="5" height="5" fill="#dcdcdc"/><rect x="68" y="48" width="5" height="5" fill="#dcdcdc"/><rect x="78" y="48" width="5" height="5" fill="#dcdcdc"/><rect x="88" y="48" width="5" height="5" fill="#dcdcdc"/><rect x="98" y="48" width="5" height="5" fill="#dcdcdc"/><rect x="23" y="53" width="5" height="5" fill="#dcdcdc"/><rect x="33" y="53" width="5" height="5" fill="#dcdcdc"/><rect x="43" y="53" width="5" height="5" fill="#dcdcdc"/><rect x="53" y="53" width="5" height="5" fill="#dcdcdc"/><rect x="63" y="53" width="5" height="5" fill="#dcdcdc"/><rect x="73" y="53" width="5" height="5" fill="#dcdcdc"/><rect x="83" y="53" width="5" height="5" fill="#dcdcdc"/><rect x="93" y="53" width="5" height="5" fill="#dcdcdc"/><rect x="103" y="53" width="5" height="5" fill="#dcdcdc"/><rect x="18" y="58" width="5" height="5" fill="#dcdcdc"/><rect x="28" y="58" width="5" height="5" fill="#dcdcdc"/><rect x="38" y="58" width="5" height="5" fill="#dcdcdc"/><rect x="48" y="58" width="5" height="5" fill="#dcdcdc"/><rect x="58" y="58" width="5" height="5" fill="#dcdcdc"/><rect x="68" y="58" width="5" height="5" fill="#dcdcdc"/><rect x="78" y="58" width="5" height="5" fill="#dcdcdc"/><rect x="88" y="58" width="5" height="5" fill="#dcdcdc"/><rect x="98" y="58" width="5" height="5" fill="#dcdcdc"/><rect x="23" y="63" width="5" height="5" fill="#dcdcdc"/><rect x="33" y="63" width="5" height="5" fill="#dcdcdc"/><rect x="43" y="63" width="5" height="5" fill="#dcdcdc"/><rect x="53" y="63" width="5" height="5" fill="#dcdcdc"/><rect x="63" y="63" width="5" height="5" fill="#dcdcdc"/><rect x="73" y="63" width="5" height="5" fill="#dcdcdc"/><rect x="83" y="63" width="5" height="5" fill="#dcdcdc"/><rect x="93" y="63" width="5" height="5" fill="#dcdcdc"/><rect x="103" y="63" width="5" height="5" fill="#dcdcdc"/><rect x="18" y="68" width="5" height="5" fill="#dcdcdc"/><rect x="28" y="68" width="5" height="5" fill="#dcdcdc"/><rect x="38" y="68" width="5" height="5" fill="#dcdcdc"/><rect x="48" y="68" width="5" height="5" fill="#dcdcdc"/><rect x="58" y="68" width="5" height="5" fill="#dcdcdc"/><rect x="68" y="68" width="5" height="5" fill="#dcdcdc"/><rect x="78" y="68" width="5" height="5" fill="#dcdcdc"/><rect x="88" y="68" width="5" height="5" fill="#dcdcdc"/><rect x="98" y="68" width="5" height="5" fill="#dcdcdc"/><rect x="23" y="73" width="5" height="5" fill="#dcdcdc"/><rect x="33" y="73" width="5" height="5" fill="#dcdcdc"/><rect x="43" y="73" width="5" height="5" fill="#dcdcdc"/><rect x="53" y="73" width="5" height="5" fill="#dcdcdc"/><rect x="63" y="73" width="5" height="5" fill="#dcdcdc"/><rect x="73" y="73" width="5" height="5" fill="#dcdcdc"/><rect x="83" y="73" width="5" height="5" fill="#dcdcdc"/><rect x="93" y="73" width="5" height="5" fill="#dcdcdc"/><rect x="103" y="73" width="5" height="5" fill="#dcdcdc"/><rect x="18" y="78" width="5" height="5" fill="#dcdcdc"/><rect x="28" y="78" width="5" height="5" fill="#dcdcdc"/><rect x="38" y="78" width="5" height="5" fill="#dcdcdc"/><rect x="48" y="78" width="5" height="5" fill="#dcdcdc"/><rect x="58" y="78" width="5" height="5" fill="#dcdcdc"/><rect x="68" y="78" width="5" height="5" fill="#dcdcdc"/><rect x="78" y="78" width="5" height="5" fill="#dcdcdc"/><rect x="88" y="78" width="5" height="5" fill="#dcdcdc"/><rect x="98" y="78" width="5" height="5" fill="#dcdcdc"/><rect x="23" y="83" width="5" height="5" fill="#dcdcdc"/><rect x="33" y="83" width="5" height="5" fill="#dcdcdc"/><rect x="43" y="83" width="5" height="5" fill="#dcdcdc"/><rect x="53" y="83" width="5" height="5" fill="#dcdcdc"/><rect x="63" y="83" width="5" height="5" fill="#dcdcdc"/><rect x="73" y="83" width="5" height="5" fill="#dcdcdc"/><rect x="83" y="83" width="5" height="5" fill="#dcdcdc"/><rect x="93" y="83" width="5" height="5" fill="#dcdcdc"/><rect x="103" y="83" width="5" height="5" fill="#dcdcdc"/><rect x="18" y="88" width="5" height="5" fill="#dcdcdc"/><rect x="28" y="88" width="5" height="5" fill="#dcdcdc"/><rect x="38" y="88" width="5" height="5" fill="#dcdcdc"/><rect x="48" y="88" width="5" height="5" fill="#dcdcdc"/><rect x="58" y="88" width="5" height="5" fill="#dcdcdc"/><rect x="68" y="88" width="5" height="5" fill="#dcdcdc"/><rect x="78" y="88" width="5" height="5" fill="#dcdcdc"/><rect x="88" y="88" width="5" height="5" fill="#dcdcdc"/><rect x="98" y="88" width="5" height="5" fill="#dcdcdc"/><rect x="23" y="93" width="5" height="5" fill="#dcdcdc"/><rect x="33" y="93" width="5" height="5" fill="#dcdcdc"/><rect x="43" y="93" width="5" height="5" fill="#dcdcdc"/><rect x="53" y="93" width="5" height="5" fill="#dcdcdc"/><rect x="63" y="93" width="5" height="5" fill="#dcdcdc"/><rect x="73" y="93" width="5" height="5" fill="#dcdcdc"/><rect x="83" y="93" width="5" height="5" fill="#dcdcdc"/><rect x="93" y="93" width="5" height="5" fill="#dcdcdc"/><rect x="103" y="93" width="5" height="5" fill="#dcdcdc"/><rect x="18" y="98" width="5" height="5" fill="#dcdcdc"/><rect x="28" y="98" width="5" height="5" fill="#dcdcdc"/><rect x="38" y="98" width="5" height="5" fill="#dcdcdc"/><rect x="48" y="98" width="5" height="5" fill="#dcdcdc"/><rect x="58" y="98" width="5" height="5" fill="#dcdcdc"/><rect x="68" y="98" width="5" height="5" fill="#dcdcdc"/><rect x="78" y="98" width="5" height="5" fill="#dcdcdc"/><rect x="88" y="98" width="5" height="5" fill="#dcdcdc"/><rect x="98" y="98" width="5" height="5" fill="#dcdcdc"/><rect x="23" y="103" width="5" height="5" fill="#dcdcdc"/><rect x="33" y="103" width="5" height="5" fill="#dcdcdc"/><rect x="43" y="103" width="5" height="5" fill="#dcdcdc"/><rect x="53" y="103" width="5" height="5" fill="#dcdcdc"/><rect x="63" y="103" width="5" height="5" fill="#dcdcdc"/><rect x="73" y="103" width="5" height="5" fill="#dcdcdc"/><rect x="83" y="103" width="5" height="5" fill="#dcdcdc"/><rect x="93" y="103" width="5" height="5" fill="#dcdcdc"/><rect x="103" y="103" width="5" height="5" fill="#dcdcdc"/><rect x="28" y="23" width="5" height="5" fill="#1eaa2a"/><rect x="48" y="23" width="5" height="5" fill="#1eaa2a"/><rect x="63" y="23" width="5" height="5" fill="#1eaa2a"/><rect x="68" y="23" width="5" height="5" fill="#1eaa2a"/><rect x="78" y="23" width="5" height="5" fill="#1eaa2a"/><rect x="93" y="23" width="5" height="5" fill="#1eaa2a"/><rect x="98" y="23" width="5" height="5" fill="#1eaa2a"/><rect x="43" y="28" width="5" height="5" fill="#1eaa2a"/><rect x="78" y="28" width="5" height="5" fill="#1eaa2a"/><rect x="23" y="33" width="5" height="5" fill="#1eaa2a"/><rect x="58" y="33" width="5" height="5" fill="#1eaa2a"/><rect x="98" y="33" width="5" height="5" fill="#1eaa2a"/><rect x="38" y="38" width="5" height="5" fill="#1eaa2a"/><rect x="43" y="38" width="5" height="5" fill="#1eaa2a"/><rect x="63" y="38" width="5" height="5" fill="#1eaa2a"/><rect x="78" y="38" width="5" height="5" fill="#1eaa2a"/><rect x="83" y="38" width="5" height="5" fill="#1eaa2a"/><rect x="93" y="38" width="5" height="5" fill="#1eaa2a"/><rect x="98" y="38" width="5" height="5" fill="#1eaa2a"/><rect x="18" y="43" width="5" height="5" fill="#1eaa2a"/><rect x="98" y="43" width="5" height="5" fill="#1eaa2a"/><rect x="88" y="48" width="5" height="5" fill="#1eaa2a"/><rect x="23" y="53" width="5" height="5" fill="#1eaa2a"/><rect x="33" y="53" width="5" height="5" fill="#1eaa2a"/><rect x="43" y="53" width="5" height="5" fill="#1eaa2a"/><rect x="48" y="53" width="5" height="5" fill="#1eaa2a"/><rect x="58" y="53" width="5" height="5" fill="#1eaa2a"/><rect x="63" y="53" width="5" height="5" fill="#1eaa2a"/><rect x="68" y="53" width="5" height="5" fill="#1eaa2a"/><rect x="83" y="53" width="5" height="5" fill="#1eaa2a"/><rect x="98" y="53" width="5" height="5" fill="#1eaa2a"/><rect x="103" y="53" width="5" height="5" fill="#1eaa2a"/><rect x="88" y="58" width="5" height="5" fill="#1eaa2a"/><rect x="73" y="63" width="5" height="5" fill="#1eaa2a"/><rect x="28" y="68" width="5" height="5" fill="#1eaa2a"/><rect x="38" y="68" width="5" height="5" fill="#1eaa2a"/><rect x="43" y="68" width="5" height="5" fill="#1eaa2a"/><rect x="58" y="68" width="5" height="5" fill="#1eaa2a"/><rect x="63" y="68" width="5" height="5" fill="#1eaa2a"/><rect x="78" y="68" width="5" height="5" fill="#1eaa2a"/><rect x="93" y="68" width="5" height="5" fill="#1eaa2a"/><rect x="88" y="73" width="5" height="5" fill="#1eaa2a"/><rect x="93" y="73" width="5" height="5" fill="#1eaa2a"/><rect x="23" y="78" width="5" height="5" fill="#1eaa2a"/><rect x="48" y="78" width="5" height="5" fill="#1eaa2a"/><rect x="53" y="78" width="5" height="5" fill="#1eaa2a"/><rect x="68" y="78" width="5" height="5" fill="#1eaa2a"/><rect x="73" y="78" width="5" height="5" fill="#1eaa2a"/><rect x="98" y="78" width="5" height="5" fill="#1eaa2a"/><rect x="73" y="83" width="5" height="5" fill="#1eaa2a"/><rect x="88" y="83" width="5" height="5" fill="#1eaa2a"/><rect x="28" y="88" width="5" height="5" fill="#1eaa2a"/><rect x="33" y="88" width="5" height="5" fill="#1eaa2a"/><rect x="43" y="88" width="5" height="5" fill="#1eaa2a"/><rect x="48" y="88" width="5" height="5" fill="#1eaa2a"/><rect x="63" y="88" width="5" height="5" fill="#1eaa2a"/><rect x="83" y="88" width="5" height="5" fill="#1eaa2a"/><rect x="88" y="88" width="5" height="5" fill="#1eaa2a"/><rect x="93" y="88" width="5" height="5" fill="#1eaa2a"/><rect x="23" y="98" width="5" height="5" fill="#1eaa2a"/><rect x="33" y="98" width="5" height="5" fill="#1eaa2a"/><rect x="38" y="98" width="5" height="5" fill="#1eaa2a"/><rect x="58" y="98" width="5" height="5" fill="#1eaa2a"/><rect x="63" y="98" width="5" height="5" fill="#1eaa2a"/><rect x="68" y="98" width="5" height="5" fill="#1eaa2a"/><rect x="83" y="98" width="5" height="5" fill="#1eaa2a"/><rect x="88" y="98" width="5" height="5" fill="#1eaa2a"/><rect x="93" y="98" width="5" height="5" fill="#1eaa2a"/><rect x="98" y="98" width="5" height="5" fill="#1eaa2a"/></svg><svg style="left:925px;top:807px" width="125" height="125"><path d="M77.5 18V107.5" stroke="#333" stroke-width="1.2"/><rect x="26.5" y="27.5" width="16" height="16" fill="#fff" stroke="#c8c8c8"/><path d="M29 33L36 40L47 27" fill="none" stroke="#1aa01a" stroke-width="2.2"/><rect x="82.5" y="27.5" width="16" height="16" fill="#fff" stroke="#c8c8c8"/><path d="M85 33L91 40L101 27M92 36L95 39L106 27" fill="none" stroke="#1aa01a" stroke-width="2.2"/><path d="M18.4 100.9C20.1 101.4 25.3 104.7 29.0 103.8C32.7 102.9 36.9 96.9 40.6 95.3C44.4 93.8 48.6 96.7 51.3 94.5C53.9 92.3 54.3 84.9 56.6 82.2C58.9 79.4 63.1 81.5 65.1 77.9C67.0 74.4 66.5 64.5 68.2 60.9C69.9 57.4 74.1 57.4 75.3 56.7" fill="none" stroke="#1050e0" stroke-width="2.6"/><path d="M18.4 93.8C19.9 94.5 24.7 98.0 27.9 97.5C31.1 96.9 34.3 91.8 37.5 90.7C40.6 89.5 44.5 92.4 47.0 90.7C49.5 88.9 50.0 82.2 52.3 80.0C54.6 77.9 58.7 80.4 60.8 77.9C62.9 75.4 62.9 68.0 65.1 65.2C67.2 62.4 71.8 63.6 73.6 60.9C75.3 58.3 75.3 51.2 75.7 49.3" fill="none" stroke="#13a813" stroke-width="2.6"/><path d="M77.8 79.0C78.9 77.0 81.7 69.6 84.2 67.3C86.6 65.0 90.2 65.9 92.7 65.2C95.1 64.5 96.6 64.7 99.0 63.1C101.5 61.5 106.1 56.9 107.5 55.6" fill="none" stroke="#1050e0" stroke-width="2.6"/><path d="M77.8 70.5C79.2 70.5 83.8 72.4 86.3 70.5C88.8 68.5 90.5 61.1 92.7 58.8C94.8 56.5 96.6 58.3 99.0 56.7C101.5 55.1 106.1 50.5 107.5 49.3" fill="none" stroke="#13a813" stroke-width="2.6"/></svg><svg style="left:1090px;top:807px" width="125" height="125"><rect x="18.5" y="18.5" width="89" height="89" fill="#fff" stroke="#c4c4c4"/><path d="M19 24H107" stroke="#c8c8c8"/><path d="M23 50.5H103M23 80H103" stroke="#d8d8d8" stroke-width="1.3"/><path d="M28.700000000000003 41.5L34.2 33.5L39.7 41.5Z" fill="#18a818"/><path d="M28.700000000000003 69.5L34.2 61.5L39.7 69.5Z" fill="#18a818"/><path d="M28.700000000000003 90L34.2 98L39.7 90Z" fill="#f05a46"/><text x="60.4" y="44.5" font-size="20" font-family="Liberation Sans" text-anchor="middle" fill="#1050e0">$</text><text x="88.6" y="44.5" font-size="20" font-family="Liberation Sans" text-anchor="middle" fill="#1050e0">€</text><text x="60.4" y="72.5" font-size="20" font-family="Liberation Sans" text-anchor="middle" fill="#f05a46">£</text><text x="88.6" y="72.5" font-size="20" font-family="Liberation Sans" text-anchor="middle" fill="#1050e0">¥</text><text x="60.4" y="101" font-size="20" font-family="Liberation Sans" text-anchor="middle" fill="#f05a46">€</text><text x="88.6" y="101" font-size="20" font-family="Liberation Sans" text-anchor="middle" fill="#f05a46">£</text></svg><svg style="left:1235px;top:807px" width="125" height="125"><polyline points="19.4,82.1 20.9,81.5 22.3,81.1 23.8,80.7 25.2,80.1 26.7,79.4 28.1,78.5 29.6,77.2 31.1,75.5 32.5,73.2 34.0,70.4 35.4,67.0 36.9,62.9 38.3,58.3 39.8,53.2 41.2,47.9 42.7,42.7 44.2,37.8 45.6,33.5 47.1,30.1 48.5,27.9 50.0,27.0 51.4,27.4 52.9,29.0 54.4,31.7 55.8,35.1 57.3,39.0 58.7,42.8 60.2,46.4 61.6,49.4 63.1,51.6 64.6,52.8 66.0,53.1 67.5,52.4 68.9,51.0 70.4,49.1 71.8,47.1 73.3,45.1 74.8,43.4 76.2,42.4 77.7,42.2 79.1,42.9 80.6,44.4 82.0,46.8 83.5,49.8 85.0,53.3 86.4,57.0 87.9,60.8 89.3,64.5 90.8,67.8 92.2,70.8 93.7,73.3 95.1,75.4 96.6,77.0 98.1,78.3 99.5,79.3 101.0,80.0 102.4,80.6 103.9,81.1 105.3,81.5 106.8,82.1" fill="none" stroke="#2b6cf0" stroke-width="0.7"/><polyline points="19.4,82.1 20.9,81.5 22.3,81.1 23.8,80.7 25.2,80.2 26.7,79.6 28.1,78.7 29.6,77.5 31.1,75.9 32.5,73.9 34.0,71.3 35.4,68.1 36.9,64.4 38.3,60.2 39.8,55.6 41.2,50.8 42.7,46.0 44.2,41.5 45.6,37.6 47.1,34.5 48.5,32.5 50.0,31.7 51.4,32.0 52.9,33.5 54.4,36.0 55.8,39.1 57.3,42.6 58.7,46.1 60.2,49.4 61.6,52.1 63.1,54.1 64.6,55.2 66.0,55.4 67.5,54.8 68.9,53.6 70.4,51.8 71.8,49.9 73.3,48.1 74.8,46.7 76.2,45.7 77.7,45.5 79.1,46.2 80.6,47.6 82.0,49.7 83.5,52.5 85.0,55.7 86.4,59.1 87.9,62.5 89.3,65.9 90.8,68.9 92.2,71.6 93.7,73.9 95.1,75.8 96.6,77.3 98.1,78.5 99.5,79.4 101.0,80.1 102.4,80.6 103.9,81.1 105.3,81.5 106.8,82.1" fill="none" stroke="#3070ee" stroke-width="0.7"/><polyline points="19.4,82.1 20.9,81.5 22.3,81.1 23.8,80.8 25.2,80.3 26.7,79.7 28.1,78.9 29.6,77.8 31.1,76.3 32.5,74.5 34.0,72.2 35.4,69.3 36.9,65.9 38.3,62.1 39.8,58.0 41.2,53.6 42.7,49.3 44.2,45.3 45.6,41.7 47.1,39.0 48.5,37.2 50.0,36.4 51.4,36.7 52.9,38.0 54.4,40.2 55.8,43.0 57.3,46.2 58.7,49.4 60.2,52.3 61.6,54.8 63.1,56.5 64.6,57.5 66.0,57.8 67.5,57.2 68.9,56.1 70.4,54.5 71.8,52.8 73.3,51.2 74.8,49.9 76.2,49.1 77.7,48.9 79.1,49.4 80.6,50.7 82.0,52.7 83.5,55.2 85.0,58.0 86.4,61.1 87.9,64.2 89.3,67.2 90.8,70.0 92.2,72.4 93.7,74.5 95.1,76.3 96.6,77.6 98.1,78.7 99.5,79.5 101.0,80.2 102.4,80.7 103.9,81.1 105.3,81.5 106.8,82.1" fill="none" stroke="#3a78ea" stroke-width="0.7"/><polyline points="19.4,82.1 20.9,81.5 22.3,81.2 23.8,80.8 25.2,80.4 26.7,79.8 28.1,79.1 29.6,78.1 31.1,76.8 32.5,75.1 34.0,73.0 35.4,70.5 36.9,67.5 38.3,64.1 39.8,60.4 41.2,56.5 42.7,52.6 44.2,49.0 45.6,45.9 47.1,43.4 48.5,41.8 50.0,41.1 51.4,41.4 52.9,42.6 54.4,44.5 55.8,47.0 57.3,49.8 58.7,52.6 60.2,55.3 61.6,57.4 63.1,59.0 64.6,59.9 66.0,60.1 67.5,59.6 68.9,58.6 70.4,57.3 71.8,55.7 73.3,54.3 74.8,53.1 76.2,52.4 77.7,52.2 79.1,52.7 80.6,53.9 82.0,55.6 83.5,57.8 85.0,60.4 86.4,63.2 87.9,66.0 89.3,68.6 90.8,71.1 92.2,73.3 93.7,75.2 95.1,76.7 96.6,77.9 98.1,78.9 99.5,79.7 101.0,80.3 102.4,80.7 103.9,81.1 105.3,81.5 106.8,82.1" fill="none" stroke="#4680e6" stroke-width="0.7"/><polyline points="19.4,82.1 20.9,81.5 22.3,81.2 23.8,80.8 25.2,80.4 26.7,79.9 28.1,79.2 29.6,78.4 31.1,77.2 32.5,75.7 34.0,73.9 35.4,71.7 36.9,69.0 38.3,66.0 39.8,62.8 41.2,59.3 42.7,56.0 44.2,52.8 45.6,50.0 47.1,47.9 48.5,46.4 50.0,45.8 51.4,46.1 52.9,47.1 54.4,48.8 55.8,51.0 57.3,53.4 58.7,55.9 60.2,58.2 61.6,60.1 63.1,61.5 64.6,62.3 66.0,62.4 67.5,62.0 68.9,61.1 70.4,60.0 71.8,58.6 73.3,57.4 74.8,56.3 76.2,55.7 77.7,55.6 79.1,56.0 80.6,57.0 82.0,58.6 83.5,60.5 85.0,62.8 86.4,65.2 87.9,67.7 89.3,70.0 90.8,72.2 92.2,74.1 93.7,75.8 95.1,77.2 96.6,78.3 98.1,79.1 99.5,79.8 101.0,80.4 102.4,80.8 103.9,81.2 105.3,81.5 106.8,82.1" fill="none" stroke="#5a8ae0" stroke-width="0.7"/><polyline points="19.4,82.1 20.9,81.5 22.3,81.2 23.8,80.9 25.2,80.5 26.7,80.0 28.1,79.4 29.6,78.7 31.1,77.7 32.5,76.4 34.0,74.8 35.4,72.8 36.9,70.5 38.3,68.0 39.8,65.1 41.2,62.2 42.7,59.3 44.2,56.5 45.6,54.2 47.1,52.3 48.5,51.1 50.0,50.5 51.4,50.7 52.9,51.6 54.4,53.1 55.8,54.9 57.3,57.0 58.7,59.2 60.2,61.1 61.6,62.8 63.1,64.0 64.6,64.6 66.0,64.8 67.5,64.4 68.9,63.7 70.4,62.7 71.8,61.5 73.3,60.4 74.8,59.6 76.2,59.0 77.7,58.9 79.1,59.3 80.6,60.2 82.0,61.5 83.5,63.2 85.0,65.2 86.4,67.3 87.9,69.4 89.3,71.4 90.8,73.3 92.2,75.0 93.7,76.4 95.1,77.6 96.6,78.6 98.1,79.3 99.5,79.9 101.0,80.4 102.4,80.8 103.9,81.2 105.3,81.5 106.8,82.1" fill="none" stroke="#6f94d8" stroke-width="0.7"/><polyline points="19.4,82.1 20.9,81.5 22.3,81.2 23.8,80.9 25.2,80.6 26.7,80.2 28.1,79.6 29.6,79.0 31.1,78.1 32.5,77.0 34.0,75.6 35.4,74.0 36.9,72.1 38.3,69.9 39.8,67.5 41.2,65.1 42.7,62.6 44.2,60.3 45.6,58.3 47.1,56.7 48.5,55.7 50.0,55.2 51.4,55.4 52.9,56.1 54.4,57.3 55.8,58.9 57.3,60.7 58.7,62.4 60.2,64.1 61.6,65.5 63.1,66.4 64.6,67.0 66.0,67.1 67.5,66.8 68.9,66.2 70.4,65.4 71.8,64.4 73.3,63.5 74.8,62.8 76.2,62.3 77.7,62.3 79.1,62.6 80.6,63.3 82.0,64.5 83.5,65.9 85.0,67.5 86.4,69.3 87.9,71.1 89.3,72.8 90.8,74.4 92.2,75.8 93.7,77.0 95.1,78.1 96.6,78.9 98.1,79.6 99.5,80.1 101.0,80.5 102.4,80.9 103.9,81.2 105.3,81.5 106.8,82.1" fill="none" stroke="#8aa0c8" stroke-width="0.7"/><polyline points="19.4,82.1 20.9,81.6 22.3,81.2 23.8,81.0 25.2,80.6 26.7,80.3 28.1,79.8 29.6,79.3 31.1,78.5 32.5,77.6 34.0,76.5 35.4,75.2 36.9,73.6 38.3,71.8 39.8,69.9 41.2,67.9 42.7,65.9 44.2,64.1 45.6,62.4 47.1,61.2 48.5,60.3 50.0,59.9 51.4,60.1 52.9,60.6 54.4,61.6 55.8,62.9 57.3,64.3 58.7,65.7 60.2,67.0 61.6,68.1 63.1,68.9 64.6,69.4 66.0,69.5 67.5,69.2 68.9,68.7 70.4,68.1 71.8,67.3 73.3,66.6 74.8,66.0 76.2,65.7 77.7,65.6 79.1,65.9 80.6,66.5 82.0,67.4 83.5,68.6 85.0,69.9 86.4,71.3 87.9,72.8 89.3,74.2 90.8,75.5 92.2,76.7 93.7,77.7 95.1,78.5 96.6,79.2 98.1,79.8 99.5,80.2 101.0,80.6 102.4,80.9 103.9,81.2 105.3,81.5 106.8,82.1" fill="none" stroke="#a0a8b8" stroke-width="0.7"/><polyline points="19.4,82.1 20.9,81.6 22.3,81.3 23.8,81.0 25.2,80.7 26.7,80.4 28.1,80.0 29.6,79.6 31.1,79.0 32.5,78.3 34.0,77.4 35.4,76.4 36.9,75.1 38.3,73.8 39.8,72.3 41.2,70.8 42.7,69.3 44.2,67.8 45.6,66.6 47.1,65.6 48.5,64.9 50.0,64.7 51.4,64.7 52.9,65.2 54.4,65.9 55.8,66.8 57.3,67.9 58.7,69.0 60.2,70.0 61.6,70.8 63.1,71.4 64.6,71.7 66.0,71.8 67.5,71.6 68.9,71.3 70.4,70.8 71.8,70.2 73.3,69.7 74.8,69.2 76.2,69.0 77.7,68.9 79.1,69.2 80.6,69.6 82.0,70.4 83.5,71.3 85.0,72.3 86.4,73.4 87.9,74.5 89.3,75.6 90.8,76.6 92.2,77.5 93.7,78.3 95.1,79.0 96.6,79.5 98.1,80.0 99.5,80.4 101.0,80.7 102.4,81.0 103.9,81.3 105.3,81.6 106.8,82.1" fill="none" stroke="#b0b0b0" stroke-width="0.7"/><path d="M19.4 82.1H106.8" stroke="#444" stroke-width="1.2"/><polyline points="31.0,82.1 32.5,82.5 34.0,83.3 35.5,84.2 37.0,85.4 38.5,86.6 40.0,87.9 41.5,89.3 43.0,90.7 44.5,92.0 46.0,93.4 47.5,94.7 49.0,95.9 50.5,97.1 52.0,98.1 53.5,99.0 55.0,99.7 56.5,100.3 58.0,100.8 59.5,101.0 61.0,101.1 62.5,101.0 64.0,100.8 65.5,100.3 67.0,99.7 68.5,99.0 70.0,98.1 71.5,97.1 73.0,95.9 74.5,94.7 76.0,93.4 77.5,92.0 79.0,90.7 80.5,89.3 82.0,87.9 83.5,86.6 85.0,85.4 86.5,84.2 88.0,83.3 89.5,82.5 91.0,82.1" fill="none" stroke="#f05040" stroke-width="0.6"/><polyline points="31.0,82.1 32.5,82.5 34.0,83.2 35.5,84.1 37.0,85.1 38.5,86.2 40.0,87.4 41.5,88.6 43.0,89.9 44.5,91.2 46.0,92.4 47.5,93.6 49.0,94.7 50.5,95.8 52.0,96.7 53.5,97.5 55.0,98.2 56.5,98.7 58.0,99.1 59.5,99.4 61.0,99.4 62.5,99.4 64.0,99.1 65.5,98.7 67.0,98.2 68.5,97.5 70.0,96.7 71.5,95.8 73.0,94.7 74.5,93.6 76.0,92.4 77.5,91.2 79.0,89.9 80.5,88.6 82.0,87.4 83.5,86.2 85.0,85.1 86.5,84.1 88.0,83.2 89.5,82.5 91.0,82.1" fill="none" stroke="#f05848" stroke-width="0.6"/><polyline points="31.0,82.1 32.5,82.4 34.0,83.1 35.5,83.9 37.0,84.8 38.5,85.8 40.0,86.9 41.5,88.0 43.0,89.2 44.5,90.3 46.0,91.4 47.5,92.5 49.0,93.5 50.5,94.4 52.0,95.3 53.5,96.0 55.0,96.6 56.5,97.1 58.0,97.5 59.5,97.7 61.0,97.8 62.5,97.7 64.0,97.5 65.5,97.1 67.0,96.6 68.5,96.0 70.0,95.3 71.5,94.4 73.0,93.5 74.5,92.5 76.0,91.4 77.5,90.3 79.0,89.2 80.5,88.0 82.0,86.9 83.5,85.8 85.0,84.8 86.5,83.9 88.0,83.1 89.5,82.4 91.0,82.1" fill="none" stroke="#f06050" stroke-width="0.6"/><polyline points="31.0,82.1 32.5,82.4 34.0,83.0 35.5,83.7 37.0,84.5 38.5,85.4 40.0,86.4 41.5,87.4 43.0,88.4 44.5,89.4 46.0,90.4 47.5,91.4 49.0,92.3 50.5,93.1 52.0,93.9 53.5,94.5 55.0,95.1 56.5,95.5 58.0,95.9 59.5,96.0 61.0,96.1 62.5,96.0 64.0,95.9 65.5,95.5 67.0,95.1 68.5,94.5 70.0,93.9 71.5,93.1 73.0,92.3 74.5,91.4 76.0,90.4 77.5,89.4 79.0,88.4 80.5,87.4 82.0,86.4 83.5,85.4 85.0,84.5 86.5,83.7 88.0,83.0 89.5,82.4 91.0,82.1" fill="none" stroke="#f06858" stroke-width="0.6"/><polyline points="31.0,82.1 32.5,82.4 34.0,82.9 35.5,83.5 37.0,84.2 38.5,85.0 40.0,85.9 41.5,86.8 43.0,87.7 44.5,88.6 46.0,89.4 47.5,90.3 49.0,91.1 50.5,91.8 52.0,92.5 53.5,93.1 55.0,93.6 56.5,93.9 58.0,94.2 59.5,94.4 61.0,94.4 62.5,94.4 64.0,94.2 65.5,93.9 67.0,93.6 68.5,93.1 70.0,92.5 71.5,91.8 73.0,91.1 74.5,90.3 76.0,89.4 77.5,88.6 79.0,87.7 80.5,86.8 82.0,85.9 83.5,85.0 85.0,84.2 86.5,83.5 88.0,82.9 89.5,82.4 91.0,82.1" fill="none" stroke="#f07060" stroke-width="0.6"/><polyline points="31.0,82.1 32.5,82.3 34.0,82.8 35.5,83.3 37.0,83.9 38.5,84.6 40.0,85.4 41.5,86.1 43.0,86.9 44.5,87.7 46.0,88.5 47.5,89.2 49.0,89.9 50.5,90.5 52.0,91.1 53.5,91.6 55.0,92.0 56.5,92.3 58.0,92.6 59.5,92.7 61.0,92.8 62.5,92.7 64.0,92.6 65.5,92.3 67.0,92.0 68.5,91.6 70.0,91.1 71.5,90.5 73.0,89.9 74.5,89.2 76.0,88.5 77.5,87.7 79.0,86.9 80.5,86.1 82.0,85.4 83.5,84.6 85.0,83.9 86.5,83.3 88.0,82.8 89.5,82.3 91.0,82.1" fill="none" stroke="#e88070" stroke-width="0.6"/><polyline points="31.0,82.1 32.5,82.3 34.0,82.7 35.5,83.1 37.0,83.7 38.5,84.2 40.0,84.9 41.5,85.5 43.0,86.2 44.5,86.8 46.0,87.5 47.5,88.1 49.0,88.7 50.5,89.2 52.0,89.7 53.5,90.1 55.0,90.5 56.5,90.8 58.0,91.0 59.5,91.1 61.0,91.1 62.5,91.1 64.0,91.0 65.5,90.8 67.0,90.5 68.5,90.1 70.0,89.7 71.5,89.2 73.0,88.7 74.5,88.1 76.0,87.5 77.5,86.8 79.0,86.2 80.5,85.5 82.0,84.9 83.5,84.2 85.0,83.7 86.5,83.1 88.0,82.7 89.5,82.3 91.0,82.1" fill="none" stroke="#c09090" stroke-width="0.6"/><polyline points="31.0,82.1 32.5,82.3 34.0,82.6 35.5,82.9 37.0,83.4 38.5,83.8 40.0,84.4 41.5,84.9 43.0,85.4 44.5,86.0 46.0,86.5 47.5,87.0 49.0,87.5 50.5,87.9 52.0,88.3 53.5,88.6 55.0,88.9 56.5,89.2 58.0,89.3 59.5,89.4 61.0,89.5 62.5,89.4 64.0,89.3 65.5,89.2 67.0,88.9 68.5,88.6 70.0,88.3 71.5,87.9 73.0,87.5 74.5,87.0 76.0,86.5 77.5,86.0 79.0,85.4 80.5,84.9 82.0,84.4 83.5,83.8 85.0,83.4 86.5,82.9 88.0,82.6 89.5,82.3 91.0,82.1" fill="none" stroke="#909090" stroke-width="0.6"/></svg><div class="a" style="left:15px;top:944px;width:1398px;height:32px;background:#f0f0f0"></div><div class="a" style="left:72px;top:944px;width:1341px;height:2px;background:#000"></div><div class="a" style="left:16px;top:944px;width:56px;height:25px;background:#fff;border:2px solid #000;border-top:none"></div><div class="t" style="left:30px;top:950px;font-size:14.5px">概述</div><div class="t" style="left:86px;top:950px;font-size:14.5px;color:#6d6d6d">設置</div><div class="t" style="left:141px;top:950px;font-size:14.5px;color:#6d6d6d">輸入</div><div class="t" style="left:196px;top:950px;font-size:14.5px;color:#6d6d6d">代理</div><div class="t" style="left:251px;top:950px;font-size:14.5px;color:#6d6d6d">日誌</div><div class="a" style="left:127px;top:948px;width:1px;height:18px;background:#808080"></div><div class="a" style="left:182px;top:948px;width:1px;height:18px;background:#808080"></div><div class="a" style="left:237px;top:948px;width:1px;height:18px;background:#808080"></div><div class="a" style="left:0px;top:976px;width:1413px;height:1px;background:#a0a0a0"></div></body></html>
